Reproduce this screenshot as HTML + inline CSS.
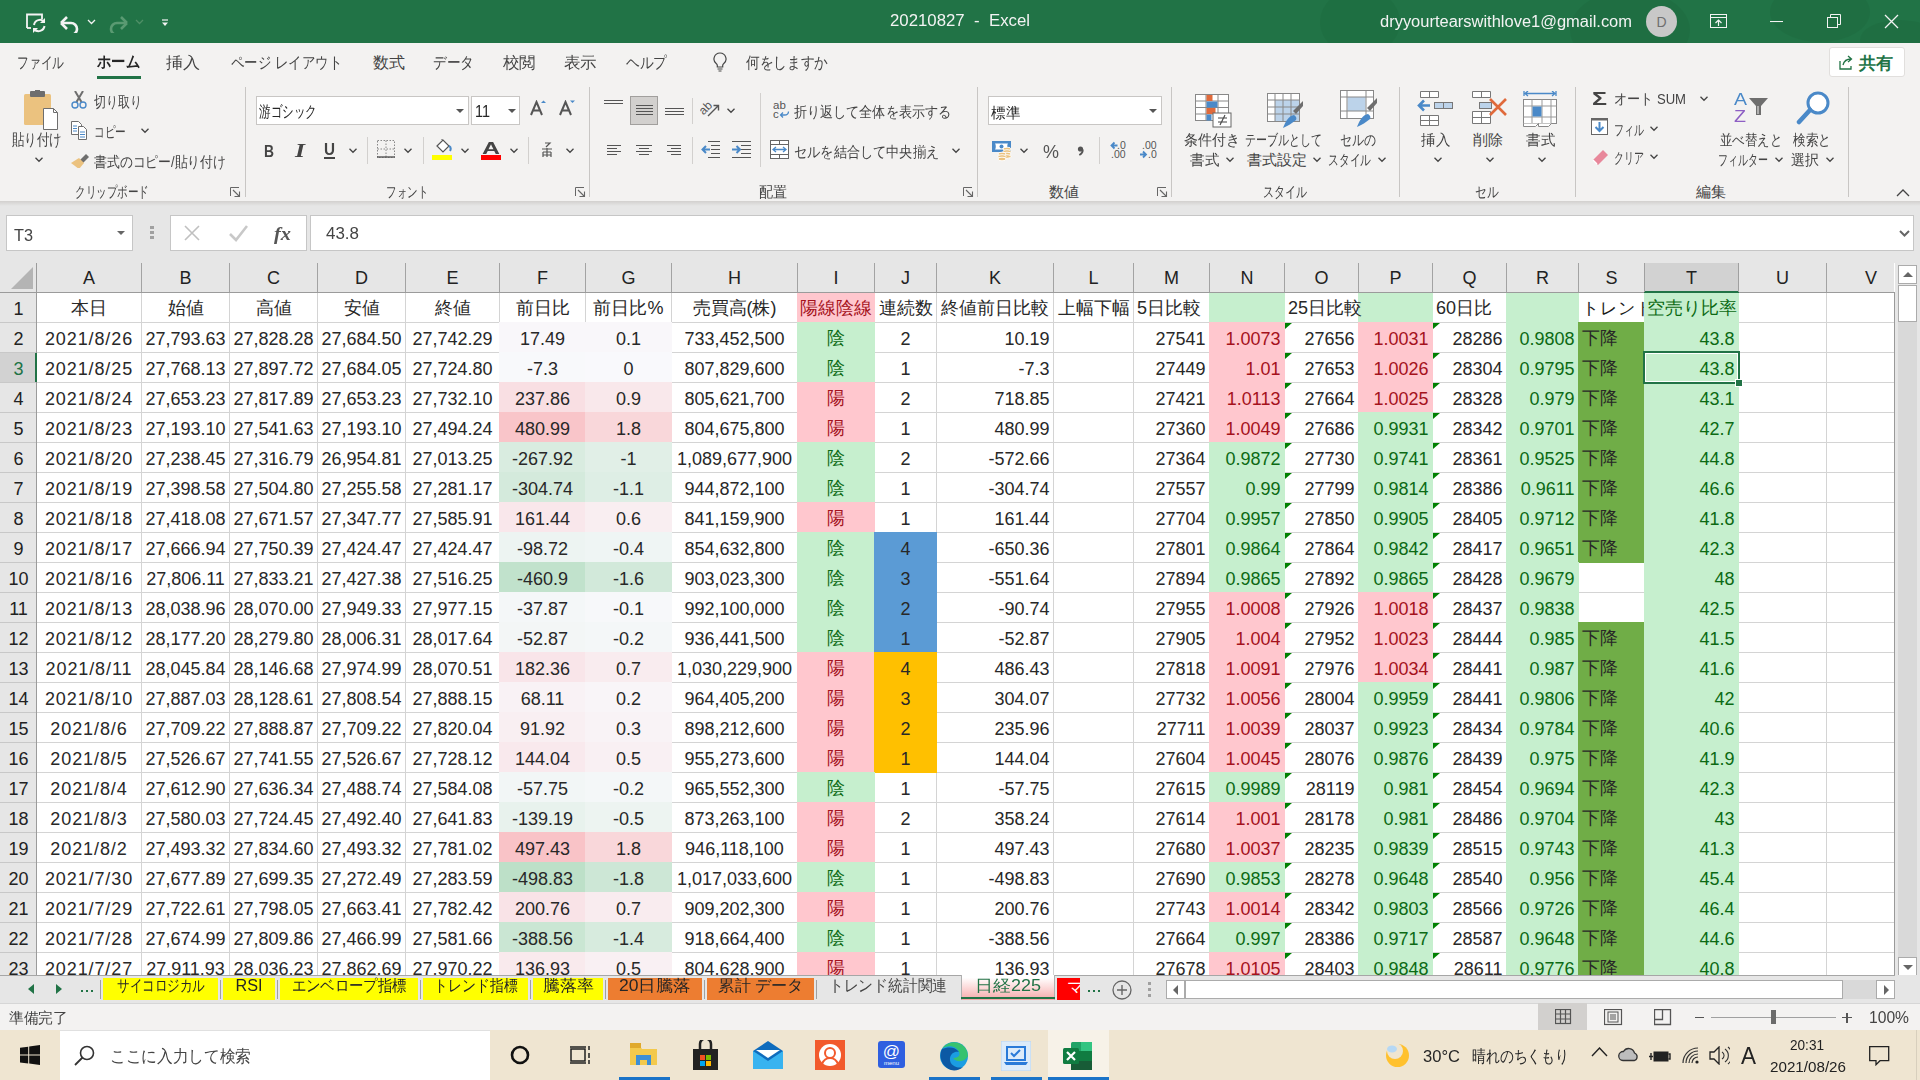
<!DOCTYPE html>
<html><head><meta charset="utf-8"><style>
html,body{margin:0;padding:0;width:1920px;height:1080px;overflow:hidden;background:#fff;}
body{position:relative;font-family:"Liberation Sans",sans-serif;}
div{position:absolute;box-sizing:border-box;}
.t{white-space:nowrap;}
</style></head><body>
<div style="left:0px;top:0px;width:1920px;height:43px;background:#217346;"></div>
<svg style="position:absolute;left:1300px;top:0" width="620" height="43"><g fill="#1e6b40" opacity="0.55"><ellipse cx="60" cy="22" rx="40" ry="34"/><ellipse cx="330" cy="30" rx="60" ry="40"/><ellipse cx="520" cy="12" rx="50" ry="30"/><ellipse cx="600" cy="40" rx="40" ry="20"/></g></svg>
<svg style="position:absolute;left:25px;top:13px;" width="22" height="21" viewBox="0 0 22 21"><g fill="none" stroke="#f3f3f3" stroke-width="1.8"><path d="M2 15V1.5h15V6"/><path d="M2 15h4"/></g><g fill="none" stroke="#f3f3f3" stroke-width="2"><path d="M9 12a6 6 0 0 1 10.5-3"/><path d="M19.5 13a6 6 0 0 1-10.5 3"/></g><path d="M20 5v5h-5z" fill="#f3f3f3"/><path d="M8 20v-5h5z" fill="#f3f3f3"/></svg>
<svg style="position:absolute;left:60px;top:15px;" width="20" height="18" viewBox="0 0 20 18"><path d="M2 8h9a6 6 0 0 1 0 12h-1" fill="none" stroke="#f3f3f3" stroke-width="2.6"/><path d="M1 8l6-6M1 8l6 6" stroke="#f3f3f3" stroke-width="2.6" fill="none"/></svg>
<svg style="position:absolute;left:87px;top:19px;" width="9" height="6" viewBox="0 0 9 6"><path d="M1 1l3.5 3.5L8 1" fill="none" stroke="#f3f3f3" stroke-width="1.3"/></svg>
<svg style="position:absolute;left:108px;top:15px;" width="20" height="18" viewBox="0 0 20 18"><path d="M18 8H9a6 6 0 0 0 0 12h1" fill="none" stroke="#5a9a72" stroke-width="2.6"/><path d="M19 8l-6-6M19 8l-6 6" stroke="#5a9a72" stroke-width="2.6" fill="none"/></svg>
<svg style="position:absolute;left:135px;top:19px;" width="9" height="6" viewBox="0 0 9 6"><path d="M1 1l3.5 3.5L8 1" fill="none" stroke="#4f8f66" stroke-width="1.3"/></svg>
<svg style="position:absolute;left:162px;top:19px;" width="7" height="8" viewBox="0 0 7 8"><path d="M0 1h6" stroke="#f3f3f3" stroke-width="1.2"/><path d="M0 3.5h6L3 7z" fill="#f3f3f3"/></svg>
<div class="t" style="top:12.64px;font-size:16px;line-height:16px;color:#f3f3f3;left:660px;width:600px;text-align:center;transform-origin:50% 50%;transform:scaleX(1.0493);">20210827&nbsp;&nbsp;-&nbsp;&nbsp;Excel</div>
<div class="t" style="top:13.64px;font-size:16px;line-height:16px;color:#f3f3f3;left:1380px;transform-origin:0 50%;transform:scaleX(1.0295);">dryyourtearswithlove1@gmail.com</div>
<div style="left:1646px;top:6px;width:31px;height:31px;border-radius:50%;background:#c8c8c8"></div>
<div class="t" style="top:15.06px;font-size:14px;line-height:14px;color:#6f6f6f;left:1361.5px;width:600px;text-align:center;transform-origin:50% 50%;">D</div>
<svg style="position:absolute;left:1710px;top:14px;" width="18" height="15" viewBox="0 0 18 15"><rect x="0.5" y="0.5" width="16" height="13" fill="none" stroke="#f3f3f3"/><path d="M0.5 3.5h16" stroke="#f3f3f3"/><path d="M8.5 12V6M5.5 9l3-3 3 3" fill="none" stroke="#f3f3f3" stroke-width="1.2"/></svg>
<svg style="position:absolute;left:1770px;top:21px;" width="14" height="2" viewBox="0 0 14 2"><path d="M0 0.5h13" stroke="#f3f3f3" stroke-width="1.1"/></svg>
<svg style="position:absolute;left:1827px;top:14px;" width="15" height="15" viewBox="0 0 15 15"><rect x="0.5" y="3.5" width="10" height="10" fill="none" stroke="#f3f3f3"/><path d="M3.5 3.5V0.5h10v10h-3" fill="none" stroke="#f3f3f3"/></svg>
<svg style="position:absolute;left:1884px;top:14px;" width="15" height="15" viewBox="0 0 15 15"><path d="M1 1l13 13M14 1L1 14" stroke="#f3f3f3" stroke-width="1.3"/></svg>
<div style="left:0px;top:43px;width:1920px;height:159px;background:#f3f2f1;"></div>
<div style="left:0;top:201px;width:1920px;height:5px;background:linear-gradient(#d2d0ce,#e6e6e6)"></div>
<div style="left:0px;top:206px;width:1920px;height:57px;background:#e6e6e6;"></div>
<div class="t" style="top:54.64px;font-size:16px;line-height:16px;color:#444;left:17px;transform-origin:0 50%;transform:scaleX(0.7344);">ファイル</div>
<div class="t" style="top:54.64px;font-size:16px;line-height:16px;color:#444;left:166px;transform-origin:0 50%;transform:scaleX(1.0625);">挿入</div>
<div class="t" style="top:54.64px;font-size:16px;line-height:16px;color:#444;left:231px;transform-origin:0 50%;transform:scaleX(0.8380);">ページ レイアウト</div>
<div class="t" style="top:54.64px;font-size:16px;line-height:16px;color:#444;left:373px;transform-origin:0 50%;transform:scaleX(1.0000);">数式</div>
<div class="t" style="top:54.64px;font-size:16px;line-height:16px;color:#444;left:433px;transform-origin:0 50%;transform:scaleX(0.8542);">データ</div>
<div class="t" style="top:54.64px;font-size:16px;line-height:16px;color:#444;left:503px;transform-origin:0 50%;transform:scaleX(1.0312);">校閲</div>
<div class="t" style="top:54.64px;font-size:16px;line-height:16px;color:#444;left:564px;transform-origin:0 50%;transform:scaleX(1.0312);">表示</div>
<div class="t" style="top:54.64px;font-size:16px;line-height:16px;color:#444;left:626px;transform-origin:0 50%;transform:scaleX(0.8542);">ヘルプ</div>
<div class="t" style="top:54.64px;font-size:16px;line-height:16px;color:#444;left:746px;transform-origin:0 50%;transform:scaleX(0.8542);">何をしますか</div>
<div class="t" style="top:53.64px;font-size:16px;line-height:16px;color:#262626;font-weight:700;left:97px;transform-origin:0 50%;transform:scaleX(0.8958);">ホーム</div>
<div style="left:97px;top:76px;width:44px;height:3px;background:#217346;"></div>
<svg style="position:absolute;left:713px;top:52px;" width="14" height="20" viewBox="0 0 14 20"><path d="M7 1a6 6 0 0 1 3.6 10.8c-.6.5-.9 1-.9 1.7V15H4.3v-1.5c0-.7-.3-1.2-.9-1.7A6 6 0 0 1 7 1z" fill="none" stroke="#444" stroke-width="1.2"/><path d="M4.5 17h5M5.5 19h3" stroke="#444" stroke-width="1.2"/></svg>
<div style="left:1829px;top:47px;width:76px;height:30px;background:#fff;border:1px solid #e1dfdd;border-radius:3px"></div>
<svg style="position:absolute;left:1839px;top:55px;" width="15" height="15" viewBox="0 0 15 15"><path d="M1 6v8h11v-3" fill="none" stroke="#217346" stroke-width="1.3"/><path d="M4 10c1-4 4-6 8-6M9 1l3.5 3L9 7" fill="none" stroke="#217346" stroke-width="1.3"/></svg>
<div class="t" style="top:54.68px;font-size:17px;line-height:17px;color:#217346;font-weight:700;left:1859px;transform-origin:0 50%;transform:scaleX(1.0000);">共有</div>
<div style="left:245px;top:87px;width:1px;height:110px;background:#c8c6c4;"></div>
<div style="left:589px;top:87px;width:1px;height:110px;background:#c8c6c4;"></div>
<div style="left:977px;top:87px;width:1px;height:110px;background:#c8c6c4;"></div>
<div style="left:1171px;top:87px;width:1px;height:110px;background:#c8c6c4;"></div>
<div style="left:1399px;top:87px;width:1px;height:110px;background:#c8c6c4;"></div>
<div style="left:1575px;top:87px;width:1px;height:110px;background:#c8c6c4;"></div>
<div style="left:1848px;top:87px;width:1px;height:110px;background:#c8c6c4;"></div>
<div class="t" style="top:184.1px;font-size:15px;line-height:15px;color:#444;left:75px;transform-origin:0 50%;transform:scaleX(0.7048);">クリップボード</div>
<div class="t" style="top:184.1px;font-size:15px;line-height:15px;color:#444;left:386px;transform-origin:0 50%;transform:scaleX(0.7000);">フォント</div>
<div class="t" style="top:184.1px;font-size:15px;line-height:15px;color:#444;left:759px;transform-origin:0 50%;transform:scaleX(0.9333);">配置</div>
<div class="t" style="top:184.1px;font-size:15px;line-height:15px;color:#444;left:1049px;transform-origin:0 50%;transform:scaleX(1.0000);">数値</div>
<div class="t" style="top:184.1px;font-size:15px;line-height:15px;color:#444;left:1263px;transform-origin:0 50%;transform:scaleX(0.7333);">スタイル</div>
<div class="t" style="top:184.1px;font-size:15px;line-height:15px;color:#444;left:1475px;transform-origin:0 50%;transform:scaleX(0.7833);">セル</div>
<div class="t" style="top:184.1px;font-size:15px;line-height:15px;color:#444;left:1696px;transform-origin:0 50%;transform:scaleX(1.0000);">編集</div>
<svg style="position:absolute;left:230px;top:187px;" width="11" height="11" viewBox="0 0 11 11"><path d="M0.5 9V0.5H9" fill="none" stroke="#666"/><path d="M3 3l6.5 6.5M9.5 4.5v5h-5" fill="none" stroke="#666" stroke-width="1.1"/></svg>
<svg style="position:absolute;left:575px;top:187px;" width="11" height="11" viewBox="0 0 11 11"><path d="M0.5 9V0.5H9" fill="none" stroke="#666"/><path d="M3 3l6.5 6.5M9.5 4.5v5h-5" fill="none" stroke="#666" stroke-width="1.1"/></svg>
<svg style="position:absolute;left:963px;top:187px;" width="11" height="11" viewBox="0 0 11 11"><path d="M0.5 9V0.5H9" fill="none" stroke="#666"/><path d="M3 3l6.5 6.5M9.5 4.5v5h-5" fill="none" stroke="#666" stroke-width="1.1"/></svg>
<svg style="position:absolute;left:1157px;top:187px;" width="11" height="11" viewBox="0 0 11 11"><path d="M0.5 9V0.5H9" fill="none" stroke="#666"/><path d="M3 3l6.5 6.5M9.5 4.5v5h-5" fill="none" stroke="#666" stroke-width="1.1"/></svg>
<svg style="position:absolute;left:1896px;top:189px;" width="14" height="9" viewBox="0 0 14 9"><path d="M1 7l6-6 6 6" fill="none" stroke="#444" stroke-width="1.3"/></svg>
<svg style="position:absolute;left:24px;top:90px;" width="35" height="40" viewBox="0 0 35 40"><rect x="0" y="4" width="27" height="31" rx="1.5" fill="#ebc27f"/><rect x="6" y="1" width="15" height="6" rx="1" fill="#6e6e6e"/><rect x="11" y="0" width="5" height="3" fill="#6e6e6e"/><path d="M19.5 18.5h10l4 4v17h-14z" fill="#fff" stroke="#6e6e6e"/><path d="M29.5 18.5v4h4" fill="none" stroke="#6e6e6e"/></svg>
<div class="t" style="top:131.94px;font-size:16px;line-height:16px;color:#444;left:12px;transform-origin:0 50%;transform:scaleX(0.7812);">貼り付け</div>
<svg style="position:absolute;left:35px;top:157px;" width="8" height="6" viewBox="0 0 8 6"><path d="M0.5 0.8l3.5 3.5 3.5-3.5" fill="none" stroke="#444" stroke-width="1.3"/></svg>
<svg style="position:absolute;left:71px;top:91px;" width="16" height="18" viewBox="0 0 16 18"><path d="M4 0l6.5 11M12 0L5.5 11" stroke="#6e6e6e" stroke-width="2"/><circle cx="4" cy="14" r="3" fill="none" stroke="#4a89c8" stroke-width="1.4"/><circle cx="12" cy="14" r="3" fill="none" stroke="#4a89c8" stroke-width="1.4"/></svg>
<div class="t" style="top:93.8px;font-size:15px;line-height:15px;color:#444;left:94px;transform-origin:0 50%;transform:scaleX(0.8000);">切り取り</div>
<svg style="position:absolute;left:71px;top:121px;" width="17" height="20" viewBox="0 0 17 20"><path d="M0.5 0.5h7l3 3v10H0.5z" fill="#fff" stroke="#6e6e6e"/><path d="M7.5 5.5h5l3 3v10h-8z" fill="#fff" stroke="#6e6e6e"/><path d="M2 5h4M2 7.5h4M2 10h4M9 11h5M9 13.5h5M9 16h5" stroke="#4a89c8"/></svg>
<div class="t" style="top:124.1px;font-size:15px;line-height:15px;color:#444;left:94px;transform-origin:0 50%;transform:scaleX(0.7111);">コピー</div>
<svg style="position:absolute;left:141px;top:128px;" width="8" height="6" viewBox="0 0 8 6"><path d="M0.5 0.8l3.5 3.5 3.5-3.5" fill="none" stroke="#444" stroke-width="1.3"/></svg>
<svg style="position:absolute;left:71px;top:151px;" width="18" height="17" viewBox="0 0 18 17"><path d="M9 9l6-6 3 3-6 6z" fill="#6e6e6e"/><path d="M0 12l8-5 5 5-5 6z" fill="#ebc27f"/></svg>
<div class="t" style="top:154.1px;font-size:15px;line-height:15px;color:#444;left:94px;transform-origin:0 50%;transform:scaleX(0.8562);">書式のコピー/貼り付け</div>
<div style="left:256px;top:96px;width:213px;height:29px;background:#fff;border:1px solid #c8c6c4"></div>
<div style="left:471px;top:96px;width:49px;height:29px;background:#fff;border:1px solid #c8c6c4"></div>
<div class="t" style="top:103.64px;font-size:16px;line-height:16px;color:#262626;left:259px;transform-origin:0 50%;transform:scaleX(0.7250);">游ゴシック</div>
<div class="t" style="top:103.64px;font-size:16px;line-height:16px;color:#262626;left:475px;transform-origin:0 50%;transform:scaleX(0.9031);">11</div>
<svg style="position:absolute;left:456px;top:109px;" width="8" height="4" viewBox="0 0 8 4"><path d="M0 0h8L4 4z" fill="#555"/></svg>
<svg style="position:absolute;left:508px;top:109px;" width="8" height="4" viewBox="0 0 8 4"><path d="M0 0h8L4 4z" fill="#555"/></svg>
<svg style="position:absolute;left:530px;top:100px;" width="16" height="16" viewBox="0 0 16 16"><path d="M1 15L6.5 2 12 15M3 10.5h7" fill="none" stroke="#555" stroke-width="2"/><path d="M11 3l2.5-2.5L16 3z" fill="#4a89c8"/></svg>
<svg style="position:absolute;left:559px;top:100px;" width="16" height="16" viewBox="0 0 16 16"><path d="M1 15L6.5 2 12 15M3 10.5h7" fill="none" stroke="#555" stroke-width="2"/><path d="M11 0.5h5L13.5 3z" fill="#4a89c8"/></svg>
<div class="t" style="top:142.68px;font-size:17px;line-height:17px;color:#444;font-weight:700;left:264px;transform-origin:0 50%;transform:scaleX(0.8142);">B</div>
<div class="t" style="top:142.22px;font-size:18px;line-height:18px;color:#444;font-weight:700;font-family:'Liberation Serif',serif;left:295px;transform-origin:0 50%;transform:scaleX(1.4254);"><i>I</i></div>
<div class="t" style="top:142.14px;font-size:16px;line-height:16px;color:#444;font-weight:700;left:324px;transform-origin:0 50%;transform:scaleX(0.9514);">U</div>
<div style="left:324px;top:157px;width:11px;height:1.5px;background:#444;"></div>
<svg style="position:absolute;left:349px;top:148px;" width="8" height="6" viewBox="0 0 8 6"><path d="M0.5 0.8l3.5 3.5 3.5-3.5" fill="none" stroke="#444" stroke-width="1.3"/></svg>
<div style="left:367px;top:137px;width:1px;height:27px;background:#d2d0ce;"></div>
<svg style="position:absolute;left:377px;top:140px;" width="18" height="18" viewBox="0 0 18 18"><path d="M0.5 0.5h17v17H0.5zM9 0.5v17M0.5 9h17" fill="none" stroke="#888" stroke-dasharray="1.5 1.5"/><path d="M0 17h18" stroke="#555" stroke-width="1.4"/></svg>
<svg style="position:absolute;left:404px;top:148px;" width="8" height="6" viewBox="0 0 8 6"><path d="M0.5 0.8l3.5 3.5 3.5-3.5" fill="none" stroke="#444" stroke-width="1.3"/></svg>
<div style="left:423px;top:137px;width:1px;height:27px;background:#d2d0ce;"></div>
<svg style="position:absolute;left:432px;top:139px;" width="21" height="15" viewBox="0 0 21 15"><path d="M5 7l6-6 6 6-6 6z" fill="#fff" stroke="#555" stroke-width="1.2"/><path d="M10 1V0" stroke="#555"/><path d="M17 7c2 1 2 3 1 5" fill="none" stroke="#4a89c8" stroke-width="2"/></svg>
<div style="left:432px;top:155px;width:20px;height:5px;background:#ffff00;"></div>
<svg style="position:absolute;left:461px;top:148px;" width="8" height="6" viewBox="0 0 8 6"><path d="M0.5 0.8l3.5 3.5 3.5-3.5" fill="none" stroke="#444" stroke-width="1.3"/></svg>
<div class="t" style="top:139.68px;font-size:17px;line-height:17px;color:#444;font-weight:700;left:482px;transform-origin:0 50%;transform:scaleX(1.4656);">A</div>
<div style="left:481px;top:155px;width:20px;height:5px;background:#ff0000;"></div>
<svg style="position:absolute;left:510px;top:148px;" width="8" height="6" viewBox="0 0 8 6"><path d="M0.5 0.8l3.5 3.5 3.5-3.5" fill="none" stroke="#444" stroke-width="1.3"/></svg>
<div style="left:528px;top:137px;width:1px;height:27px;background:#d2d0ce;"></div>
<svg style="position:absolute;left:542px;top:142px;" width="10" height="16" viewBox="0 0 10 16"><path d="M3 1h5L4 5M0 7h10M1 10h8M1 13h8M5 6v9M1 10v5M9 10v5" fill="none" stroke="#555" stroke-width="1.2"/></svg>
<svg style="position:absolute;left:566px;top:148px;" width="8" height="6" viewBox="0 0 8 6"><path d="M0.5 0.8l3.5 3.5 3.5-3.5" fill="none" stroke="#444" stroke-width="1.3"/></svg>
<svg style="position:absolute;left:604px;top:100px;" width="20" height="8" viewBox="0 0 20 8"><path d="M0 0.5h19M0 3.5h19" stroke="#555" stroke-width="1.2"/></svg>
<div style="left:630px;top:96px;width:28px;height:29px;background:#d2d0ce;border:1px solid #a19f9d"></div>
<svg style="position:absolute;left:636px;top:105px;" width="20" height="14" viewBox="0 0 20 14"><path d="M0 0.5h17M0 3.5h17M0 6.5h17M0 9.5h17" stroke="#555" stroke-width="1.2"/></svg>
<svg style="position:absolute;left:665px;top:108px;" width="20" height="11" viewBox="0 0 20 11"><path d="M0 0.5h19M0 3.5h19M0 6.5h19" stroke="#555" stroke-width="1.2"/></svg>
<div style="left:692px;top:98px;width:1px;height:26px;background:#d2d0ce;"></div>
<svg style="position:absolute;left:700px;top:100px;" width="22" height="18" viewBox="0 0 22 18"><text x="0" y="0" font-family="Liberation Sans" font-size="12" fill="#555" transform="translate(3.5 15.5) rotate(-45)">ab</text><path d="M8 16L18 6M13.5 5.5H18.5V10.5" fill="none" stroke="#555" stroke-width="1.4"/></svg>
<svg style="position:absolute;left:727px;top:108px;" width="8" height="6" viewBox="0 0 8 6"><path d="M0.5 0.8l3.5 3.5 3.5-3.5" fill="none" stroke="#444" stroke-width="1.3"/></svg>
<div style="left:760px;top:93px;width:1px;height:74px;background:#d2d0ce;"></div>
<svg style="position:absolute;left:773px;top:100px;" width="18" height="20" viewBox="0 0 18 20"><text x="0" y="9" font-family="Liberation Sans" font-size="11.5" fill="#555">ab</text><text x="0" y="18" font-family="Liberation Sans" font-size="11.5" fill="#555">c</text><path d="M15.5 11.5c0 2.5-1.5 3.5-4 3.5H8M10 12.5L7.5 15 10 17.5" fill="none" stroke="#4a89c8" stroke-width="1.3"/></svg>
<div class="t" style="top:103.6px;font-size:15px;line-height:15px;color:#444;left:794px;transform-origin:0 50%;transform:scaleX(0.8722);">折り返して全体を表示する</div>
<svg style="position:absolute;left:607px;top:145px;" width="20" height="14" viewBox="0 0 20 14"><path d="M0 0.5h14M0 3.5h10M0 6.5h14M0 9.5h10" stroke="#555" stroke-width="1.2"/></svg>
<svg style="position:absolute;left:636px;top:145px;" width="20" height="14" viewBox="0 0 20 14"><path d="M0 0.5h16M3 3.5h10M0 6.5h16M3 9.5h10" stroke="#555" stroke-width="1.2"/></svg>
<svg style="position:absolute;left:667px;top:145px;" width="20" height="14" viewBox="0 0 20 14"><path d="M0 0.5h14M4 3.5h10M0 6.5h14M4 9.5h10" stroke="#555" stroke-width="1.2"/></svg>
<div style="left:692px;top:137px;width:1px;height:27px;background:#d2d0ce;"></div>
<svg style="position:absolute;left:701px;top:141px;" width="20" height="18" viewBox="0 0 20 18"><path d="M7 0.5h12M10 4.5h9M10 8.5h9M10 12.5h9M7 16.5h12" stroke="#555" stroke-width="1.2"/><path d="M1 8.5h8M5 5l-3.5 3.5L5 12" fill="none" stroke="#4a89c8" stroke-width="2"/></svg>
<svg style="position:absolute;left:732px;top:141px;" width="20" height="18" viewBox="0 0 20 18"><path d="M0 0.5h19M9 4.5h10M9 8.5h10M9 12.5h10M0 16.5h19" stroke="#555" stroke-width="1.2"/><path d="M0 8.5h8M4.5 5l3.5 3.5L4.5 12" fill="none" stroke="#4a89c8" stroke-width="2"/></svg>
<svg style="position:absolute;left:770px;top:140px;" width="19" height="19" viewBox="0 0 19 19"><rect x="0.5" y="0.5" width="18" height="18" fill="#fff" stroke="#666"/><path d="M0.5 4.5h18M0.5 14.5h18M9.5 0.5v4M9.5 14.5v4" stroke="#666"/><path d="M3 9.5h13M6 7l-3 2.5 3 2.5M13 7l3 2.5-3 2.5" fill="none" stroke="#4a89c8" stroke-width="1.3"/></svg>
<div class="t" style="top:144.1px;font-size:15px;line-height:15px;color:#444;left:794px;transform-origin:0 50%;transform:scaleX(0.8788);">セルを結合して中央揃え</div>
<svg style="position:absolute;left:952px;top:148px;" width="8" height="6" viewBox="0 0 8 6"><path d="M0.5 0.8l3.5 3.5 3.5-3.5" fill="none" stroke="#444" stroke-width="1.3"/></svg>
<div style="left:988px;top:96px;width:174px;height:29px;background:#fff;border:1px solid #c8c6c4"></div>
<div class="t" style="top:104.6px;font-size:15px;line-height:15px;color:#262626;left:991px;transform-origin:0 50%;transform:scaleX(0.9667);">標準</div>
<svg style="position:absolute;left:1149px;top:109px;" width="8" height="4" viewBox="0 0 8 4"><path d="M0 0h8L4 4z" fill="#555"/></svg>
<svg style="position:absolute;left:992px;top:141px;" width="20" height="21" viewBox="0 0 20 21"><rect x="0" y="0" width="19" height="11" fill="#4a89c8"/><path d="M3 2.5h13c-1 1-1 5 0 6H3c1-1 1-5 0-6z" fill="#fff"/><circle cx="9.5" cy="5.5" r="2" fill="#4a89c8"/><g fill="#ebc27f" stroke="#fff" stroke-width="0.9"><ellipse cx="15" cy="8" rx="4" ry="1.8"/><ellipse cx="15" cy="10.5" rx="4" ry="1.8"/><ellipse cx="15" cy="13" rx="4" ry="1.8"/><ellipse cx="15" cy="15.5" rx="4" ry="1.8"/><ellipse cx="10" cy="13" rx="4" ry="1.8"/><ellipse cx="10" cy="15.5" rx="4" ry="1.8"/><ellipse cx="10" cy="18" rx="4" ry="1.8"/></g></svg>
<svg style="position:absolute;left:1020px;top:148px;" width="8" height="6" viewBox="0 0 8 6"><path d="M0.5 0.8l3.5 3.5 3.5-3.5" fill="none" stroke="#444" stroke-width="1.3"/></svg>
<div class="t" style="top:141.76px;font-size:19px;line-height:19px;color:#555;left:1043px;transform-origin:0 50%;transform:scaleX(0.9464);">%</div>
<svg style="position:absolute;left:1077px;top:146px;" width="8" height="10" viewBox="0 0 8 10"><circle cx="3.5" cy="3" r="2.6" fill="#555"/><path d="M5.8 3.5c0 3-1.5 4.5-3.5 5.5" fill="none" stroke="#555" stroke-width="1.8"/></svg>
<div style="left:1099px;top:137px;width:1px;height:27px;background:#d2d0ce;"></div>
<svg style="position:absolute;left:1110px;top:141px;" width="18" height="19" viewBox="0 0 18 19"><text x="7" y="8" font-family="Liberation Sans" font-size="10.5" fill="#555">.0</text><text x="1" y="17" font-family="Liberation Sans" font-size="10.5" fill="#555">.00</text><path d="M1.5 4.5h6M4.5 1.5L1.5 4.5 4.5 7.5" fill="none" stroke="#4a89c8" stroke-width="1.8"/></svg>
<svg style="position:absolute;left:1139px;top:141px;" width="18" height="19" viewBox="0 0 18 19"><text x="3" y="8" font-family="Liberation Sans" font-size="10.5" fill="#555">.00</text><text x="9" y="17" font-family="Liberation Sans" font-size="10.5" fill="#555">.0</text><path d="M1 13.5h6M4 10.5L7 13.5 4 16.5" fill="none" stroke="#4a89c8" stroke-width="1.8"/></svg>
<svg style="position:absolute;left:1195px;top:94px;" width="37" height="34" viewBox="0 0 37 34"><rect x="0.5" y="0.5" width="33" height="26" fill="#fff" stroke="#888"/><path d="M0.5 7h33M0.5 13.5h33M0.5 20h33M11 0.5v26M23 0.5v26" stroke="#888"/><rect x="11.5" y="1" width="6" height="6" fill="#e06a3b"/><rect x="11.5" y="7.5" width="11" height="6" fill="#4a89c8"/><rect x="11.5" y="14" width="9" height="6" fill="#e06a3b"/><rect x="11.5" y="20.5" width="5" height="6" fill="#4a89c8"/><rect x="18" y="19" width="18" height="14" fill="#fff" stroke="#666"/><path d="M23 24h9M23 28h9M30 21l-5 10" stroke="#444" stroke-width="1.1"/></svg>
<div class="t" style="top:132.4px;font-size:15px;line-height:15px;color:#444;left:1184px;transform-origin:0 50%;transform:scaleX(0.9333);">条件付き</div>
<div class="t" style="top:151.6px;font-size:15px;line-height:15px;color:#444;left:1190px;transform-origin:0 50%;transform:scaleX(0.9667);">書式</div>
<svg style="position:absolute;left:1226px;top:157px;" width="8" height="6" viewBox="0 0 8 6"><path d="M0.5 0.8l3.5 3.5 3.5-3.5" fill="none" stroke="#444" stroke-width="1.3"/></svg>
<svg style="position:absolute;left:1267px;top:93px;" width="37" height="36" viewBox="0 0 37 36"><rect x="0.5" y="0.5" width="32" height="28" fill="#fff" stroke="#888"/><rect x="8" y="7" width="24" height="21" fill="#bcd3ea"/><path d="M0.5 7h32M0.5 14h32M0.5 21h32M8 0.5v28M16 0.5v28M24 0.5v28" stroke="#888"/><path d="M26 18l10-10v5l-7 8z" fill="#6e6e6e"/><path d="M16 35c3-8 6-12 11-13 2 1 3 3 2 5-4 3-8 6-13 8z" fill="#4a89c8"/></svg>
<div class="t" style="top:132.4px;font-size:15px;line-height:15px;color:#444;left:1245px;transform-origin:0 50%;transform:scaleX(0.7333);">テーブルとして</div>
<div class="t" style="top:151.6px;font-size:15px;line-height:15px;color:#444;left:1247px;transform-origin:0 50%;transform:scaleX(1.0000);">書式設定</div>
<svg style="position:absolute;left:1313px;top:157px;" width="8" height="6" viewBox="0 0 8 6"><path d="M0.5 0.8l3.5 3.5 3.5-3.5" fill="none" stroke="#444" stroke-width="1.3"/></svg>
<svg style="position:absolute;left:1340px;top:90px;" width="38" height="39" viewBox="0 0 38 39"><rect x="0.5" y="0.5" width="33" height="28" fill="#fff" stroke="#888"/><rect x="7.5" y="7" width="18" height="14" fill="#bcd3ea"/><path d="M0.5 7h33M0.5 21h33M7 0.5v28M26 0.5v28" stroke="#888"/><path d="M27 18l10-10v5l-7 8z" fill="#6e6e6e"/><path d="M17 37c3-8 6-12 11-13 2 1 3 3 2 5-4 3-8 6-13 8z" fill="#4a89c8"/></svg>
<div class="t" style="top:132.4px;font-size:15px;line-height:15px;color:#444;left:1340px;transform-origin:0 50%;transform:scaleX(0.8000);">セルの</div>
<div class="t" style="top:151.6px;font-size:15px;line-height:15px;color:#444;left:1328px;transform-origin:0 50%;transform:scaleX(0.7167);">スタイル</div>
<svg style="position:absolute;left:1378px;top:157px;" width="8" height="6" viewBox="0 0 8 6"><path d="M0.5 0.8l3.5 3.5 3.5-3.5" fill="none" stroke="#444" stroke-width="1.3"/></svg>
<svg style="position:absolute;left:1417px;top:91px;" width="37" height="36" viewBox="0 0 37 36"><path d="M3.5 0.5h18v6h-18zM12.5 0.5v6M3.5 24.5h18v10h-18zM12.5 24.5v10M3.5 29.5h18" fill="#fff" stroke="#777"/><rect x="17.5" y="11.5" width="18" height="6" fill="#bcd3ea" stroke="#777"/><path d="M26.5 11.5v6" stroke="#777"/><path d="M2 14.5h11M7 9.5l-5 5 5 5" fill="none" stroke="#4a89c8" stroke-width="2.6"/></svg>
<div class="t" style="top:132.4px;font-size:15px;line-height:15px;color:#444;left:1421px;transform-origin:0 50%;transform:scaleX(0.9667);">挿入</div>
<svg style="position:absolute;left:1434px;top:157px;" width="8" height="6" viewBox="0 0 8 6"><path d="M0.5 0.8l3.5 3.5 3.5-3.5" fill="none" stroke="#444" stroke-width="1.3"/></svg>
<svg style="position:absolute;left:1472px;top:91px;" width="36" height="34" viewBox="0 0 36 34"><path d="M0.5 0.5h18v6h-18zM9.5 0.5v6M0.5 20.5h18v12h-18zM9.5 20.5v12M0.5 26.5h18" fill="#fff" stroke="#777"/><rect x="7.5" y="11.5" width="12" height="6" fill="#bcd3ea" stroke="#777"/><path d="M18 8l16 16M34 8L18 24" stroke="#e06a3b" stroke-width="2.6"/></svg>
<div class="t" style="top:132.4px;font-size:15px;line-height:15px;color:#444;left:1473px;transform-origin:0 50%;transform:scaleX(1.0000);">削除</div>
<svg style="position:absolute;left:1486px;top:157px;" width="8" height="6" viewBox="0 0 8 6"><path d="M0.5 0.8l3.5 3.5 3.5-3.5" fill="none" stroke="#444" stroke-width="1.3"/></svg>
<svg style="position:absolute;left:1523px;top:91px;" width="35" height="37" viewBox="0 0 35 37"><path d="M1 0v5M33 0v5M2 2.5h30M5 0l-3 2.5L5 5M29 0l3 2.5L29 5" fill="none" stroke="#4a89c8" stroke-width="1.3"/><rect x="0.5" y="8.5" width="33" height="24" fill="#fff" stroke="#888"/><path d="M0.5 15h33M0.5 26h33M9 8.5v24M19 8.5v24M28 8.5v24" stroke="#999"/><rect x="9.5" y="15.5" width="9" height="10" fill="#4a89c8"/><path d="M0.5 32.5v3h12l3-3M15.5 32.5v3h10l3-3" fill="#fff" stroke="#888"/></svg>
<div class="t" style="top:132.4px;font-size:15px;line-height:15px;color:#444;left:1526px;transform-origin:0 50%;transform:scaleX(0.9667);">書式</div>
<svg style="position:absolute;left:1538px;top:157px;" width="8" height="6" viewBox="0 0 8 6"><path d="M0.5 0.8l3.5 3.5 3.5-3.5" fill="none" stroke="#444" stroke-width="1.3"/></svg>
<div class="t" style="top:89.26px;font-size:19px;line-height:19px;color:#444;font-weight:700;left:1592px;transform-origin:0 50%;transform:scaleX(1.3151);">&Sigma;</div>
<div class="t" style="top:91.1px;font-size:15px;line-height:15px;color:#444;left:1614px;transform-origin:0 50%;transform:scaleX(0.8727);">オート SUM</div>
<svg style="position:absolute;left:1700px;top:96px;" width="8" height="6" viewBox="0 0 8 6"><path d="M0.5 0.8l3.5 3.5 3.5-3.5" fill="none" stroke="#444" stroke-width="1.3"/></svg>
<svg style="position:absolute;left:1591px;top:118px;" width="18" height="18" viewBox="0 0 18 18"><rect x="0.5" y="0.5" width="16" height="16" fill="#fff" stroke="#666"/><path d="M0.5 1.5h16" stroke="#666" stroke-width="2"/><path d="M8.5 4v9M4.5 9l4 4 4-4" fill="none" stroke="#4a89c8" stroke-width="2"/></svg>
<div class="t" style="top:121.6px;font-size:15px;line-height:15px;color:#444;left:1614px;transform-origin:0 50%;transform:scaleX(0.6667);">フィル</div>
<svg style="position:absolute;left:1650px;top:126px;" width="8" height="6" viewBox="0 0 8 6"><path d="M0.5 0.8l3.5 3.5 3.5-3.5" fill="none" stroke="#444" stroke-width="1.3"/></svg>
<svg style="position:absolute;left:1592px;top:148px;" width="17" height="17" viewBox="0 0 17 17"><path d="M1 12l10-10 5 5-10 10z" fill="#e8889b"/><path d="M1 12l4 4" stroke="#fff" stroke-width="1.2"/></svg>
<div class="t" style="top:150.1px;font-size:15px;line-height:15px;color:#444;left:1614px;transform-origin:0 50%;transform:scaleX(0.6667);">クリア</div>
<svg style="position:absolute;left:1650px;top:154px;" width="8" height="6" viewBox="0 0 8 6"><path d="M0.5 0.8l3.5 3.5 3.5-3.5" fill="none" stroke="#444" stroke-width="1.3"/></svg>
<div class="t" style="top:91.64px;font-size:16px;line-height:16px;color:#4a89c8;left:1734px;transform-origin:0 50%;transform:scaleX(1.2182);">A</div>
<div class="t" style="top:109.14px;font-size:16px;line-height:16px;color:#8d5fc4;left:1734px;transform-origin:0 50%;transform:scaleX(1.2268);">Z</div>
<svg style="position:absolute;left:1749px;top:98px;" width="19" height="18" viewBox="0 0 19 18"><path d="M0 0h19l-7 8v9h-5V8z" fill="#6e6e6e"/><path d="M9 8v8" stroke="#f3f2f1"/></svg>
<div class="t" style="top:132.4px;font-size:15px;line-height:15px;color:#444;left:1720px;transform-origin:0 50%;transform:scaleX(0.8267);">並べ替えと</div>
<div class="t" style="top:151.6px;font-size:15px;line-height:15px;color:#444;left:1718px;transform-origin:0 50%;transform:scaleX(0.6667);">フィルター</div>
<svg style="position:absolute;left:1775px;top:157px;" width="8" height="6" viewBox="0 0 8 6"><path d="M0.5 0.8l3.5 3.5 3.5-3.5" fill="none" stroke="#444" stroke-width="1.3"/></svg>
<svg style="position:absolute;left:1796px;top:91px;" width="35" height="35" viewBox="0 0 35 35"><circle cx="22" cy="12" r="10" fill="#fff" stroke="#4a89c8" stroke-width="3"/><path d="M14 19L3 31" stroke="#4a89c8" stroke-width="4.5" stroke-linecap="round"/></svg>
<div class="t" style="top:132.4px;font-size:15px;line-height:15px;color:#444;left:1793px;transform-origin:0 50%;transform:scaleX(0.8444);">検索と</div>
<div class="t" style="top:151.6px;font-size:15px;line-height:15px;color:#444;left:1791px;transform-origin:0 50%;transform:scaleX(0.9333);">選択</div>
<svg style="position:absolute;left:1826px;top:157px;" width="8" height="6" viewBox="0 0 8 6"><path d="M0.5 0.8l3.5 3.5 3.5-3.5" fill="none" stroke="#444" stroke-width="1.3"/></svg>
<div style="left:6px;top:215px;width:127px;height:36px;background:#fff;border:1px solid #c6c6c6"></div>
<div class="t" style="top:226.68px;font-size:17px;line-height:17px;color:#444;left:14px;transform-origin:0 50%;transform:scaleX(0.9575);">T3</div>
<svg style="position:absolute;left:117px;top:231px;" width="8" height="4" viewBox="0 0 8 4"><path d="M0 0h8L4 4z" fill="#666"/></svg>
<div style="left:150px;top:226px;width:4px;height:3px;background:#a0a0a0;"></div>
<div style="left:150px;top:231px;width:4px;height:3px;background:#a0a0a0;"></div>
<div style="left:150px;top:236px;width:4px;height:3px;background:#a0a0a0;"></div>
<div style="left:170px;top:215px;width:137px;height:36px;background:#fff;border:1px solid #c6c6c6"></div>
<svg style="position:absolute;left:184px;top:225px;" width="16" height="16" viewBox="0 0 16 16"><path d="M1 1l14 14M15 1L1 15" stroke="#c0c0c0" stroke-width="1.6"/></svg>
<svg style="position:absolute;left:229px;top:224px;" width="19" height="18" viewBox="0 0 19 18"><path d="M1 10l6 6L18 2" fill="none" stroke="#c8c8c8" stroke-width="2.6"/></svg>
<div class="t" style="top:224.26px;font-size:19px;line-height:19px;color:#555;font-weight:700;font-family:'Liberation Serif',serif;left:274px;transform-origin:0 50%;transform:scaleX(1.0740);"><i>fx</i></div>
<div style="left:310px;top:215px;width:1604px;height:36px;background:#fff;border:1px solid #c6c6c6"></div>
<div class="t" style="top:224.68px;font-size:17px;line-height:17px;color:#444;left:326px;transform-origin:0 50%;transform:scaleX(0.9972);">43.8</div>
<svg style="position:absolute;left:1899px;top:230px;" width="11" height="7" viewBox="0 0 11 7"><path d="M1 1l4.5 4.5L10 1" fill="none" stroke="#666" stroke-width="2"/></svg>
<div style="left:37px;top:293px;width:1857px;height:682px;background:#ffffff;"></div>
<div style="left:0px;top:263px;width:36px;height:712px;background:#e6e6e6;"></div>
<div style="left:0px;top:263px;width:1894px;height:29px;background:#e6e6e6;"></div>
<div style="left:37px;top:322px;width:1857px;height:1px;background:#d4d4d4;"></div>
<div style="left:37px;top:352px;width:1857px;height:1px;background:#d4d4d4;"></div>
<div style="left:37px;top:382px;width:1857px;height:1px;background:#d4d4d4;"></div>
<div style="left:37px;top:412px;width:1857px;height:1px;background:#d4d4d4;"></div>
<div style="left:37px;top:442px;width:1857px;height:1px;background:#d4d4d4;"></div>
<div style="left:37px;top:472px;width:1857px;height:1px;background:#d4d4d4;"></div>
<div style="left:37px;top:502px;width:1857px;height:1px;background:#d4d4d4;"></div>
<div style="left:37px;top:532px;width:1857px;height:1px;background:#d4d4d4;"></div>
<div style="left:37px;top:562px;width:1857px;height:1px;background:#d4d4d4;"></div>
<div style="left:37px;top:592px;width:1857px;height:1px;background:#d4d4d4;"></div>
<div style="left:37px;top:622px;width:1857px;height:1px;background:#d4d4d4;"></div>
<div style="left:37px;top:652px;width:1857px;height:1px;background:#d4d4d4;"></div>
<div style="left:37px;top:682px;width:1857px;height:1px;background:#d4d4d4;"></div>
<div style="left:37px;top:712px;width:1857px;height:1px;background:#d4d4d4;"></div>
<div style="left:37px;top:742px;width:1857px;height:1px;background:#d4d4d4;"></div>
<div style="left:37px;top:772px;width:1857px;height:1px;background:#d4d4d4;"></div>
<div style="left:37px;top:802px;width:1857px;height:1px;background:#d4d4d4;"></div>
<div style="left:37px;top:832px;width:1857px;height:1px;background:#d4d4d4;"></div>
<div style="left:37px;top:862px;width:1857px;height:1px;background:#d4d4d4;"></div>
<div style="left:37px;top:892px;width:1857px;height:1px;background:#d4d4d4;"></div>
<div style="left:37px;top:922px;width:1857px;height:1px;background:#d4d4d4;"></div>
<div style="left:37px;top:952px;width:1857px;height:1px;background:#d4d4d4;"></div>
<div style="left:141px;top:293px;width:1px;height:682px;background:#d4d4d4;"></div>
<div style="left:229px;top:293px;width:1px;height:682px;background:#d4d4d4;"></div>
<div style="left:317px;top:293px;width:1px;height:682px;background:#d4d4d4;"></div>
<div style="left:405px;top:293px;width:1px;height:682px;background:#d4d4d4;"></div>
<div style="left:499px;top:293px;width:1px;height:682px;background:#d4d4d4;"></div>
<div style="left:585px;top:293px;width:1px;height:682px;background:#d4d4d4;"></div>
<div style="left:671px;top:293px;width:1px;height:682px;background:#d4d4d4;"></div>
<div style="left:797px;top:293px;width:1px;height:682px;background:#d4d4d4;"></div>
<div style="left:874px;top:293px;width:1px;height:682px;background:#d4d4d4;"></div>
<div style="left:936px;top:293px;width:1px;height:682px;background:#d4d4d4;"></div>
<div style="left:1053px;top:293px;width:1px;height:682px;background:#d4d4d4;"></div>
<div style="left:1133px;top:293px;width:1px;height:682px;background:#d4d4d4;"></div>
<div style="left:1209px;top:293px;width:1px;height:682px;background:#d4d4d4;"></div>
<div style="left:1284px;top:293px;width:1px;height:682px;background:#d4d4d4;"></div>
<div style="left:1358px;top:293px;width:1px;height:682px;background:#d4d4d4;"></div>
<div style="left:1432px;top:293px;width:1px;height:682px;background:#d4d4d4;"></div>
<div style="left:1506px;top:293px;width:1px;height:682px;background:#d4d4d4;"></div>
<div style="left:1578px;top:293px;width:1px;height:682px;background:#d4d4d4;"></div>
<div style="left:1644px;top:293px;width:1px;height:682px;background:#d4d4d4;"></div>
<div style="left:1738px;top:293px;width:1px;height:682px;background:#d4d4d4;"></div>
<div style="left:1826px;top:293px;width:1px;height:682px;background:#d4d4d4;"></div>
<div style="left:141px;top:263px;width:1px;height:29px;background:#a3a3a3;"></div>
<div style="left:229px;top:263px;width:1px;height:29px;background:#a3a3a3;"></div>
<div style="left:317px;top:263px;width:1px;height:29px;background:#a3a3a3;"></div>
<div style="left:405px;top:263px;width:1px;height:29px;background:#a3a3a3;"></div>
<div style="left:499px;top:263px;width:1px;height:29px;background:#a3a3a3;"></div>
<div style="left:585px;top:263px;width:1px;height:29px;background:#a3a3a3;"></div>
<div style="left:671px;top:263px;width:1px;height:29px;background:#a3a3a3;"></div>
<div style="left:797px;top:263px;width:1px;height:29px;background:#a3a3a3;"></div>
<div style="left:874px;top:263px;width:1px;height:29px;background:#a3a3a3;"></div>
<div style="left:936px;top:263px;width:1px;height:29px;background:#a3a3a3;"></div>
<div style="left:1053px;top:263px;width:1px;height:29px;background:#a3a3a3;"></div>
<div style="left:1133px;top:263px;width:1px;height:29px;background:#a3a3a3;"></div>
<div style="left:1209px;top:263px;width:1px;height:29px;background:#a3a3a3;"></div>
<div style="left:1284px;top:263px;width:1px;height:29px;background:#a3a3a3;"></div>
<div style="left:1358px;top:263px;width:1px;height:29px;background:#a3a3a3;"></div>
<div style="left:1432px;top:263px;width:1px;height:29px;background:#a3a3a3;"></div>
<div style="left:1506px;top:263px;width:1px;height:29px;background:#a3a3a3;"></div>
<div style="left:1578px;top:263px;width:1px;height:29px;background:#a3a3a3;"></div>
<div style="left:1644px;top:263px;width:1px;height:29px;background:#a3a3a3;"></div>
<div style="left:1738px;top:263px;width:1px;height:29px;background:#a3a3a3;"></div>
<div style="left:1826px;top:263px;width:1px;height:29px;background:#a3a3a3;"></div>
<div style="left:1894px;top:292px;width:1px;height:683px;background:#9a9a9a;"></div>
<div style="left:0px;top:322px;width:36px;height:1px;background:#c8c8c8;"></div>
<div style="left:0px;top:352px;width:36px;height:1px;background:#c8c8c8;"></div>
<div style="left:0px;top:382px;width:36px;height:1px;background:#c8c8c8;"></div>
<div style="left:0px;top:412px;width:36px;height:1px;background:#c8c8c8;"></div>
<div style="left:0px;top:442px;width:36px;height:1px;background:#c8c8c8;"></div>
<div style="left:0px;top:472px;width:36px;height:1px;background:#c8c8c8;"></div>
<div style="left:0px;top:502px;width:36px;height:1px;background:#c8c8c8;"></div>
<div style="left:0px;top:532px;width:36px;height:1px;background:#c8c8c8;"></div>
<div style="left:0px;top:562px;width:36px;height:1px;background:#c8c8c8;"></div>
<div style="left:0px;top:592px;width:36px;height:1px;background:#c8c8c8;"></div>
<div style="left:0px;top:622px;width:36px;height:1px;background:#c8c8c8;"></div>
<div style="left:0px;top:652px;width:36px;height:1px;background:#c8c8c8;"></div>
<div style="left:0px;top:682px;width:36px;height:1px;background:#c8c8c8;"></div>
<div style="left:0px;top:712px;width:36px;height:1px;background:#c8c8c8;"></div>
<div style="left:0px;top:742px;width:36px;height:1px;background:#c8c8c8;"></div>
<div style="left:0px;top:772px;width:36px;height:1px;background:#c8c8c8;"></div>
<div style="left:0px;top:802px;width:36px;height:1px;background:#c8c8c8;"></div>
<div style="left:0px;top:832px;width:36px;height:1px;background:#c8c8c8;"></div>
<div style="left:0px;top:862px;width:36px;height:1px;background:#c8c8c8;"></div>
<div style="left:0px;top:892px;width:36px;height:1px;background:#c8c8c8;"></div>
<div style="left:0px;top:922px;width:36px;height:1px;background:#c8c8c8;"></div>
<div style="left:0px;top:952px;width:36px;height:1px;background:#c8c8c8;"></div>
<div style="left:0px;top:982px;width:36px;height:1px;background:#c8c8c8;"></div>
<div style="left:1209px;top:292px;width:76px;height:31px;background:#c6efce;"></div>
<div style="left:1358px;top:292px;width:75px;height:31px;background:#c6efce;"></div>
<div style="left:1506px;top:292px;width:73px;height:31px;background:#c6efce;"></div>
<div style="left:1644px;top:292px;width:95px;height:31px;background:#c6efce;"></div>
<div style="left:797px;top:292px;width:78px;height:31px;background:#ffc7ce;"></div>
<div style="left:499px;top:322px;width:87px;height:31px;background:#f9f7fa;"></div>
<div style="left:585px;top:322px;width:87px;height:31px;background:#f9f7fa;"></div>
<div style="left:797px;top:322px;width:78px;height:31px;background:#c6efce;"></div>
<div style="left:1209px;top:322px;width:76px;height:31px;background:#ffc7ce;"></div>
<div style="left:1358px;top:322px;width:75px;height:31px;background:#ffc7ce;"></div>
<div style="left:1506px;top:322px;width:73px;height:31px;background:#c6efce;"></div>
<div style="left:1578px;top:322px;width:67px;height:31px;background:#70ad47;"></div>
<div style="left:1644px;top:322px;width:95px;height:31px;background:#c6efce;"></div>
<div style="left:499px;top:352px;width:87px;height:31px;background:#f8f9fb;"></div>
<div style="left:585px;top:352px;width:87px;height:31px;background:#f9f9fc;"></div>
<div style="left:797px;top:352px;width:78px;height:31px;background:#c6efce;"></div>
<div style="left:1209px;top:352px;width:76px;height:31px;background:#ffc7ce;"></div>
<div style="left:1358px;top:352px;width:75px;height:31px;background:#ffc7ce;"></div>
<div style="left:1506px;top:352px;width:73px;height:31px;background:#c6efce;"></div>
<div style="left:1578px;top:352px;width:67px;height:31px;background:#70ad47;"></div>
<div style="left:1644px;top:352px;width:95px;height:31px;background:#c6efce;"></div>
<div style="left:499px;top:382px;width:87px;height:31px;background:#f9dfe3;"></div>
<div style="left:585px;top:382px;width:87px;height:31px;background:#f9e8eb;"></div>
<div style="left:797px;top:382px;width:78px;height:31px;background:#ffc7ce;"></div>
<div style="left:1209px;top:382px;width:76px;height:31px;background:#ffc7ce;"></div>
<div style="left:1358px;top:382px;width:75px;height:31px;background:#ffc7ce;"></div>
<div style="left:1506px;top:382px;width:73px;height:31px;background:#c6efce;"></div>
<div style="left:1578px;top:382px;width:67px;height:31px;background:#70ad47;"></div>
<div style="left:1644px;top:382px;width:95px;height:31px;background:#c6efce;"></div>
<div style="left:499px;top:412px;width:87px;height:31px;background:#f9c5c9;"></div>
<div style="left:585px;top:412px;width:87px;height:31px;background:#f9d7da;"></div>
<div style="left:797px;top:412px;width:78px;height:31px;background:#ffc7ce;"></div>
<div style="left:1209px;top:412px;width:76px;height:31px;background:#ffc7ce;"></div>
<div style="left:1358px;top:412px;width:75px;height:31px;background:#c6efce;"></div>
<div style="left:1506px;top:412px;width:73px;height:31px;background:#c6efce;"></div>
<div style="left:1578px;top:412px;width:67px;height:31px;background:#70ad47;"></div>
<div style="left:1644px;top:412px;width:95px;height:31px;background:#c6efce;"></div>
<div style="left:499px;top:442px;width:87px;height:31px;background:#d9ece0;"></div>
<div style="left:585px;top:442px;width:87px;height:31px;background:#e1efe7;"></div>
<div style="left:797px;top:442px;width:78px;height:31px;background:#c6efce;"></div>
<div style="left:1209px;top:442px;width:76px;height:31px;background:#c6efce;"></div>
<div style="left:1358px;top:442px;width:75px;height:31px;background:#c6efce;"></div>
<div style="left:1506px;top:442px;width:73px;height:31px;background:#c6efce;"></div>
<div style="left:1578px;top:442px;width:67px;height:31px;background:#70ad47;"></div>
<div style="left:1644px;top:442px;width:95px;height:31px;background:#c6efce;"></div>
<div style="left:499px;top:472px;width:87px;height:31px;background:#d4eadc;"></div>
<div style="left:585px;top:472px;width:87px;height:31px;background:#deeee5;"></div>
<div style="left:797px;top:472px;width:78px;height:31px;background:#c6efce;"></div>
<div style="left:1209px;top:472px;width:76px;height:31px;background:#c6efce;"></div>
<div style="left:1358px;top:472px;width:75px;height:31px;background:#c6efce;"></div>
<div style="left:1506px;top:472px;width:73px;height:31px;background:#c6efce;"></div>
<div style="left:1578px;top:472px;width:67px;height:31px;background:#70ad47;"></div>
<div style="left:1644px;top:472px;width:95px;height:31px;background:#c6efce;"></div>
<div style="left:499px;top:502px;width:87px;height:31px;background:#f9e7eb;"></div>
<div style="left:585px;top:502px;width:87px;height:31px;background:#f9eef1;"></div>
<div style="left:797px;top:502px;width:78px;height:31px;background:#ffc7ce;"></div>
<div style="left:1209px;top:502px;width:76px;height:31px;background:#c6efce;"></div>
<div style="left:1358px;top:502px;width:75px;height:31px;background:#c6efce;"></div>
<div style="left:1506px;top:502px;width:73px;height:31px;background:#c6efce;"></div>
<div style="left:1578px;top:502px;width:67px;height:31px;background:#70ad47;"></div>
<div style="left:1644px;top:502px;width:95px;height:31px;background:#c6efce;"></div>
<div style="left:499px;top:532px;width:87px;height:31px;background:#edf4f2;"></div>
<div style="left:585px;top:532px;width:87px;height:31px;background:#eff5f4;"></div>
<div style="left:797px;top:532px;width:78px;height:31px;background:#c6efce;"></div>
<div style="left:874px;top:532px;width:63px;height:31px;background:#5b9bd5;"></div>
<div style="left:1209px;top:532px;width:76px;height:31px;background:#c6efce;"></div>
<div style="left:1358px;top:532px;width:75px;height:31px;background:#c6efce;"></div>
<div style="left:1506px;top:532px;width:73px;height:31px;background:#c6efce;"></div>
<div style="left:1578px;top:532px;width:67px;height:31px;background:#70ad47;"></div>
<div style="left:1644px;top:532px;width:95px;height:31px;background:#c6efce;"></div>
<div style="left:499px;top:562px;width:87px;height:31px;background:#c1e2cc;"></div>
<div style="left:585px;top:562px;width:87px;height:31px;background:#d2e9da;"></div>
<div style="left:797px;top:562px;width:78px;height:31px;background:#c6efce;"></div>
<div style="left:874px;top:562px;width:63px;height:31px;background:#5b9bd5;"></div>
<div style="left:1209px;top:562px;width:76px;height:31px;background:#c6efce;"></div>
<div style="left:1358px;top:562px;width:75px;height:31px;background:#c6efce;"></div>
<div style="left:1506px;top:562px;width:73px;height:31px;background:#c6efce;"></div>
<div style="left:1644px;top:562px;width:95px;height:31px;background:#c6efce;"></div>
<div style="left:499px;top:592px;width:87px;height:31px;background:#f4f7f8;"></div>
<div style="left:585px;top:592px;width:87px;height:31px;background:#f7f8fa;"></div>
<div style="left:797px;top:592px;width:78px;height:31px;background:#c6efce;"></div>
<div style="left:874px;top:592px;width:63px;height:31px;background:#5b9bd5;"></div>
<div style="left:1209px;top:592px;width:76px;height:31px;background:#ffc7ce;"></div>
<div style="left:1358px;top:592px;width:75px;height:31px;background:#ffc7ce;"></div>
<div style="left:1506px;top:592px;width:73px;height:31px;background:#c6efce;"></div>
<div style="left:1644px;top:592px;width:95px;height:31px;background:#c6efce;"></div>
<div style="left:499px;top:622px;width:87px;height:31px;background:#f3f6f6;"></div>
<div style="left:585px;top:622px;width:87px;height:31px;background:#f4f7f8;"></div>
<div style="left:797px;top:622px;width:78px;height:31px;background:#c6efce;"></div>
<div style="left:874px;top:622px;width:63px;height:31px;background:#5b9bd5;"></div>
<div style="left:1209px;top:622px;width:76px;height:31px;background:#ffc7ce;"></div>
<div style="left:1358px;top:622px;width:75px;height:31px;background:#ffc7ce;"></div>
<div style="left:1506px;top:622px;width:73px;height:31px;background:#c6efce;"></div>
<div style="left:1578px;top:622px;width:67px;height:31px;background:#70ad47;"></div>
<div style="left:1644px;top:622px;width:95px;height:31px;background:#c6efce;"></div>
<div style="left:499px;top:652px;width:87px;height:31px;background:#f9e5e9;"></div>
<div style="left:585px;top:652px;width:87px;height:31px;background:#f9ecef;"></div>
<div style="left:797px;top:652px;width:78px;height:31px;background:#ffc7ce;"></div>
<div style="left:874px;top:652px;width:63px;height:31px;background:#ffc000;"></div>
<div style="left:1209px;top:652px;width:76px;height:31px;background:#ffc7ce;"></div>
<div style="left:1358px;top:652px;width:75px;height:31px;background:#ffc7ce;"></div>
<div style="left:1506px;top:652px;width:73px;height:31px;background:#c6efce;"></div>
<div style="left:1578px;top:652px;width:67px;height:31px;background:#70ad47;"></div>
<div style="left:1644px;top:652px;width:95px;height:31px;background:#c6efce;"></div>
<div style="left:499px;top:682px;width:87px;height:31px;background:#f9f2f5;"></div>
<div style="left:585px;top:682px;width:87px;height:31px;background:#f9f5f8;"></div>
<div style="left:797px;top:682px;width:78px;height:31px;background:#ffc7ce;"></div>
<div style="left:874px;top:682px;width:63px;height:31px;background:#ffc000;"></div>
<div style="left:1209px;top:682px;width:76px;height:31px;background:#ffc7ce;"></div>
<div style="left:1358px;top:682px;width:75px;height:31px;background:#c6efce;"></div>
<div style="left:1506px;top:682px;width:73px;height:31px;background:#c6efce;"></div>
<div style="left:1578px;top:682px;width:67px;height:31px;background:#70ad47;"></div>
<div style="left:1644px;top:682px;width:95px;height:31px;background:#c6efce;"></div>
<div style="left:499px;top:712px;width:87px;height:31px;background:#f9eff2;"></div>
<div style="left:585px;top:712px;width:87px;height:31px;background:#f9f3f6;"></div>
<div style="left:797px;top:712px;width:78px;height:31px;background:#ffc7ce;"></div>
<div style="left:874px;top:712px;width:63px;height:31px;background:#ffc000;"></div>
<div style="left:1209px;top:712px;width:76px;height:31px;background:#ffc7ce;"></div>
<div style="left:1358px;top:712px;width:75px;height:31px;background:#c6efce;"></div>
<div style="left:1506px;top:712px;width:73px;height:31px;background:#c6efce;"></div>
<div style="left:1578px;top:712px;width:67px;height:31px;background:#70ad47;"></div>
<div style="left:1644px;top:712px;width:95px;height:31px;background:#c6efce;"></div>
<div style="left:499px;top:742px;width:87px;height:31px;background:#f9e9ed;"></div>
<div style="left:585px;top:742px;width:87px;height:31px;background:#f9f0f3;"></div>
<div style="left:797px;top:742px;width:78px;height:31px;background:#ffc7ce;"></div>
<div style="left:874px;top:742px;width:63px;height:31px;background:#ffc000;"></div>
<div style="left:1209px;top:742px;width:76px;height:31px;background:#ffc7ce;"></div>
<div style="left:1358px;top:742px;width:75px;height:31px;background:#c6efce;"></div>
<div style="left:1506px;top:742px;width:73px;height:31px;background:#c6efce;"></div>
<div style="left:1578px;top:742px;width:67px;height:31px;background:#70ad47;"></div>
<div style="left:1644px;top:742px;width:95px;height:31px;background:#c6efce;"></div>
<div style="left:499px;top:772px;width:87px;height:31px;background:#f2f6f6;"></div>
<div style="left:585px;top:772px;width:87px;height:31px;background:#f4f7f8;"></div>
<div style="left:797px;top:772px;width:78px;height:31px;background:#c6efce;"></div>
<div style="left:1209px;top:772px;width:76px;height:31px;background:#c6efce;"></div>
<div style="left:1358px;top:772px;width:75px;height:31px;background:#c6efce;"></div>
<div style="left:1506px;top:772px;width:73px;height:31px;background:#c6efce;"></div>
<div style="left:1578px;top:772px;width:67px;height:31px;background:#70ad47;"></div>
<div style="left:1644px;top:772px;width:95px;height:31px;background:#c6efce;"></div>
<div style="left:499px;top:802px;width:87px;height:31px;background:#e8f2ed;"></div>
<div style="left:585px;top:802px;width:87px;height:31px;background:#edf4f1;"></div>
<div style="left:797px;top:802px;width:78px;height:31px;background:#ffc7ce;"></div>
<div style="left:1209px;top:802px;width:76px;height:31px;background:#ffc7ce;"></div>
<div style="left:1358px;top:802px;width:75px;height:31px;background:#c6efce;"></div>
<div style="left:1506px;top:802px;width:73px;height:31px;background:#c6efce;"></div>
<div style="left:1578px;top:802px;width:67px;height:31px;background:#70ad47;"></div>
<div style="left:1644px;top:802px;width:95px;height:31px;background:#c6efce;"></div>
<div style="left:499px;top:832px;width:87px;height:31px;background:#f9c3c7;"></div>
<div style="left:585px;top:832px;width:87px;height:31px;background:#f9d7da;"></div>
<div style="left:797px;top:832px;width:78px;height:31px;background:#ffc7ce;"></div>
<div style="left:1209px;top:832px;width:76px;height:31px;background:#ffc7ce;"></div>
<div style="left:1358px;top:832px;width:75px;height:31px;background:#c6efce;"></div>
<div style="left:1506px;top:832px;width:73px;height:31px;background:#c6efce;"></div>
<div style="left:1578px;top:832px;width:67px;height:31px;background:#70ad47;"></div>
<div style="left:1644px;top:832px;width:95px;height:31px;background:#c6efce;"></div>
<div style="left:499px;top:862px;width:87px;height:31px;background:#bde0c8;"></div>
<div style="left:585px;top:862px;width:87px;height:31px;background:#cde7d6;"></div>
<div style="left:797px;top:862px;width:78px;height:31px;background:#c6efce;"></div>
<div style="left:1209px;top:862px;width:76px;height:31px;background:#c6efce;"></div>
<div style="left:1358px;top:862px;width:75px;height:31px;background:#c6efce;"></div>
<div style="left:1506px;top:862px;width:73px;height:31px;background:#c6efce;"></div>
<div style="left:1578px;top:862px;width:67px;height:31px;background:#70ad47;"></div>
<div style="left:1644px;top:862px;width:95px;height:31px;background:#c6efce;"></div>
<div style="left:499px;top:892px;width:87px;height:31px;background:#f9e3e7;"></div>
<div style="left:585px;top:892px;width:87px;height:31px;background:#f9ecef;"></div>
<div style="left:797px;top:892px;width:78px;height:31px;background:#ffc7ce;"></div>
<div style="left:1209px;top:892px;width:76px;height:31px;background:#ffc7ce;"></div>
<div style="left:1358px;top:892px;width:75px;height:31px;background:#c6efce;"></div>
<div style="left:1506px;top:892px;width:73px;height:31px;background:#c6efce;"></div>
<div style="left:1578px;top:892px;width:67px;height:31px;background:#70ad47;"></div>
<div style="left:1644px;top:892px;width:95px;height:31px;background:#c6efce;"></div>
<div style="left:499px;top:922px;width:87px;height:31px;background:#cae6d3;"></div>
<div style="left:585px;top:922px;width:87px;height:31px;background:#d7ebde;"></div>
<div style="left:797px;top:922px;width:78px;height:31px;background:#c6efce;"></div>
<div style="left:1209px;top:922px;width:76px;height:31px;background:#c6efce;"></div>
<div style="left:1358px;top:922px;width:75px;height:31px;background:#c6efce;"></div>
<div style="left:1506px;top:922px;width:73px;height:31px;background:#c6efce;"></div>
<div style="left:1578px;top:922px;width:67px;height:31px;background:#70ad47;"></div>
<div style="left:1644px;top:922px;width:95px;height:31px;background:#c6efce;"></div>
<div style="left:499px;top:952px;width:87px;height:31px;background:#f9eaed;"></div>
<div style="left:585px;top:952px;width:87px;height:31px;background:#f9f0f3;"></div>
<div style="left:797px;top:952px;width:78px;height:31px;background:#ffc7ce;"></div>
<div style="left:1209px;top:952px;width:76px;height:31px;background:#ffc7ce;"></div>
<div style="left:1358px;top:952px;width:75px;height:31px;background:#c6efce;"></div>
<div style="left:1506px;top:952px;width:73px;height:31px;background:#c6efce;"></div>
<div style="left:1578px;top:952px;width:67px;height:31px;background:#70ad47;"></div>
<div style="left:1644px;top:952px;width:95px;height:31px;background:#c6efce;"></div>
<div class="t" style="top:298.92px;font-size:18px;line-height:18px;color:#282828;left:-211.0px;width:600px;text-align:center;transform-origin:50% 50%;">本日</div>
<div class="t" style="top:298.92px;font-size:18px;line-height:18px;color:#282828;left:-114.5px;width:600px;text-align:center;transform-origin:50% 50%;">始値</div>
<div class="t" style="top:298.92px;font-size:18px;line-height:18px;color:#282828;left:-26.5px;width:600px;text-align:center;transform-origin:50% 50%;">高値</div>
<div class="t" style="top:298.92px;font-size:18px;line-height:18px;color:#282828;left:61.5px;width:600px;text-align:center;transform-origin:50% 50%;">安値</div>
<div class="t" style="top:298.92px;font-size:18px;line-height:18px;color:#282828;left:152.5px;width:600px;text-align:center;transform-origin:50% 50%;">終値</div>
<div class="t" style="top:298.92px;font-size:18px;line-height:18px;color:#282828;left:242.5px;width:600px;text-align:center;transform-origin:50% 50%;">前日比</div>
<div class="t" style="top:298.92px;font-size:18px;line-height:18px;color:#282828;left:328.5px;width:600px;text-align:center;transform-origin:50% 50%;">前日比%</div>
<div class="t" style="top:298.92px;font-size:18px;line-height:18px;color:#282828;left:434.5px;width:600px;text-align:center;transform-origin:50% 50%;">売買高(株)</div>
<div class="t" style="top:298.92px;font-size:18px;line-height:18px;color:#a5121c;left:536.0px;width:600px;text-align:center;transform-origin:50% 50%;">陽線陰線</div>
<div class="t" style="top:298.92px;font-size:18px;line-height:18px;color:#282828;left:605.5px;width:600px;text-align:center;transform-origin:50% 50%;">連続数</div>
<div class="t" style="top:298.92px;font-size:18px;line-height:18px;color:#282828;left:695.0px;width:600px;text-align:center;transform-origin:50% 50%;">終値前日比較</div>
<div class="t" style="top:298.92px;font-size:18px;line-height:18px;color:#282828;left:793.5px;width:600px;text-align:center;transform-origin:50% 50%;">上幅下幅</div>
<div class="t" style="top:298.92px;font-size:18px;line-height:18px;color:#282828;left:1137px;transform-origin:0 50%;">5日比較</div>
<div class="t" style="top:298.92px;font-size:18px;line-height:18px;color:#282828;left:1288px;transform-origin:0 50%;">25日比較</div>
<div class="t" style="top:298.92px;font-size:18px;line-height:18px;color:#282828;left:1436px;transform-origin:0 50%;">60日比</div>
<div style="left:1579px;top:293px;width:65px;height:29px;overflow:hidden"><div class="t" style="left:3px;top:6.5px;font-size:17px;line-height:17px;color:#1a1a1a;letter-spacing:1px">トレンド</div></div>
<div class="t" style="top:298.92px;font-size:18px;line-height:18px;color:#0c6a14;left:1647px;transform-origin:0 50%;">空売り比率</div>
<div class="t" style="top:329.82px;font-size:18px;line-height:18px;color:#282828;left:-211.0px;width:600px;text-align:center;transform-origin:50% 50%;letter-spacing:0.9px">2021/8/26</div>
<div class="t" style="top:329.82px;font-size:18px;line-height:18px;color:#282828;left:-114.5px;width:600px;text-align:center;transform-origin:50% 50%;">27,793.63</div>
<div class="t" style="top:329.82px;font-size:18px;line-height:18px;color:#282828;left:-26.5px;width:600px;text-align:center;transform-origin:50% 50%;">27,828.28</div>
<div class="t" style="top:329.82px;font-size:18px;line-height:18px;color:#282828;left:61.5px;width:600px;text-align:center;transform-origin:50% 50%;">27,684.50</div>
<div class="t" style="top:329.82px;font-size:18px;line-height:18px;color:#282828;left:152.5px;width:600px;text-align:center;transform-origin:50% 50%;">27,742.29</div>
<div class="t" style="top:329.82px;font-size:18px;line-height:18px;color:#282828;left:242.5px;width:600px;text-align:center;transform-origin:50% 50%;">17.49</div>
<div class="t" style="top:329.82px;font-size:18px;line-height:18px;color:#282828;left:328.5px;width:600px;text-align:center;transform-origin:50% 50%;">0.1</div>
<div class="t" style="top:329.82px;font-size:18px;line-height:18px;color:#282828;left:434.5px;width:600px;text-align:center;transform-origin:50% 50%;">733,452,500</div>
<div class="t" style="top:328.92px;font-size:18px;line-height:18px;color:#0c6a14;left:536.0px;width:600px;text-align:center;transform-origin:50% 50%;">陰</div>
<div class="t" style="top:329.82px;font-size:18px;line-height:18px;color:#282828;left:605.5px;width:600px;text-align:center;transform-origin:50% 50%;">2</div>
<div class="t" style="top:329.82px;font-size:18px;line-height:18px;color:#282828;right:870.5px;transform-origin:100% 50%;">10.19</div>
<div class="t" style="top:329.82px;font-size:18px;line-height:18px;color:#282828;right:714.5px;transform-origin:100% 50%;">27541</div>
<div class="t" style="top:329.82px;font-size:18px;line-height:18px;color:#a5121c;right:639.5px;transform-origin:100% 50%;">1.0073</div>
<div class="t" style="top:329.82px;font-size:18px;line-height:18px;color:#282828;right:565.5px;transform-origin:100% 50%;">27656</div>
<div class="t" style="top:329.82px;font-size:18px;line-height:18px;color:#a5121c;right:491.5px;transform-origin:100% 50%;">1.0031</div>
<div class="t" style="top:329.82px;font-size:18px;line-height:18px;color:#282828;right:417.5px;transform-origin:100% 50%;">28286</div>
<div class="t" style="top:329.82px;font-size:18px;line-height:18px;color:#0c6a14;right:345.5px;transform-origin:100% 50%;">0.9808</div>
<div class="t" style="top:328.92px;font-size:18px;line-height:18px;color:#282828;left:1582px;transform-origin:0 50%;">下降</div>
<div class="t" style="top:329.82px;font-size:18px;line-height:18px;color:#0c6a14;right:185.5px;transform-origin:100% 50%;">43.8</div>
<svg style="position:absolute;left:1285px;top:323px;" width="7" height="6" viewBox="0 0 7 6"><path d="M0 0h7L0 6z" fill="#008000"/></svg>
<svg style="position:absolute;left:1433px;top:323px;" width="7" height="6" viewBox="0 0 7 6"><path d="M0 0h7L0 6z" fill="#008000"/></svg>
<div class="t" style="top:359.82px;font-size:18px;line-height:18px;color:#282828;left:-211.0px;width:600px;text-align:center;transform-origin:50% 50%;letter-spacing:0.9px">2021/8/25</div>
<div class="t" style="top:359.82px;font-size:18px;line-height:18px;color:#282828;left:-114.5px;width:600px;text-align:center;transform-origin:50% 50%;">27,768.13</div>
<div class="t" style="top:359.82px;font-size:18px;line-height:18px;color:#282828;left:-26.5px;width:600px;text-align:center;transform-origin:50% 50%;">27,897.72</div>
<div class="t" style="top:359.82px;font-size:18px;line-height:18px;color:#282828;left:61.5px;width:600px;text-align:center;transform-origin:50% 50%;">27,684.05</div>
<div class="t" style="top:359.82px;font-size:18px;line-height:18px;color:#282828;left:152.5px;width:600px;text-align:center;transform-origin:50% 50%;">27,724.80</div>
<div class="t" style="top:359.82px;font-size:18px;line-height:18px;color:#282828;left:242.5px;width:600px;text-align:center;transform-origin:50% 50%;">-7.3</div>
<div class="t" style="top:359.82px;font-size:18px;line-height:18px;color:#282828;left:328.5px;width:600px;text-align:center;transform-origin:50% 50%;">0</div>
<div class="t" style="top:359.82px;font-size:18px;line-height:18px;color:#282828;left:434.5px;width:600px;text-align:center;transform-origin:50% 50%;">807,829,600</div>
<div class="t" style="top:358.92px;font-size:18px;line-height:18px;color:#0c6a14;left:536.0px;width:600px;text-align:center;transform-origin:50% 50%;">陰</div>
<div class="t" style="top:359.82px;font-size:18px;line-height:18px;color:#282828;left:605.5px;width:600px;text-align:center;transform-origin:50% 50%;">1</div>
<div class="t" style="top:359.82px;font-size:18px;line-height:18px;color:#282828;right:870.5px;transform-origin:100% 50%;">-7.3</div>
<div class="t" style="top:359.82px;font-size:18px;line-height:18px;color:#282828;right:714.5px;transform-origin:100% 50%;">27449</div>
<div class="t" style="top:359.82px;font-size:18px;line-height:18px;color:#a5121c;right:639.5px;transform-origin:100% 50%;">1.01</div>
<div class="t" style="top:359.82px;font-size:18px;line-height:18px;color:#282828;right:565.5px;transform-origin:100% 50%;">27653</div>
<div class="t" style="top:359.82px;font-size:18px;line-height:18px;color:#a5121c;right:491.5px;transform-origin:100% 50%;">1.0026</div>
<div class="t" style="top:359.82px;font-size:18px;line-height:18px;color:#282828;right:417.5px;transform-origin:100% 50%;">28304</div>
<div class="t" style="top:359.82px;font-size:18px;line-height:18px;color:#0c6a14;right:345.5px;transform-origin:100% 50%;">0.9795</div>
<div class="t" style="top:358.92px;font-size:18px;line-height:18px;color:#282828;left:1582px;transform-origin:0 50%;">下降</div>
<div class="t" style="top:359.82px;font-size:18px;line-height:18px;color:#0c6a14;right:185.5px;transform-origin:100% 50%;">43.8</div>
<svg style="position:absolute;left:1285px;top:353px;" width="7" height="6" viewBox="0 0 7 6"><path d="M0 0h7L0 6z" fill="#008000"/></svg>
<svg style="position:absolute;left:1433px;top:353px;" width="7" height="6" viewBox="0 0 7 6"><path d="M0 0h7L0 6z" fill="#008000"/></svg>
<div class="t" style="top:389.82px;font-size:18px;line-height:18px;color:#282828;left:-211.0px;width:600px;text-align:center;transform-origin:50% 50%;letter-spacing:0.9px">2021/8/24</div>
<div class="t" style="top:389.82px;font-size:18px;line-height:18px;color:#282828;left:-114.5px;width:600px;text-align:center;transform-origin:50% 50%;">27,653.23</div>
<div class="t" style="top:389.82px;font-size:18px;line-height:18px;color:#282828;left:-26.5px;width:600px;text-align:center;transform-origin:50% 50%;">27,817.89</div>
<div class="t" style="top:389.82px;font-size:18px;line-height:18px;color:#282828;left:61.5px;width:600px;text-align:center;transform-origin:50% 50%;">27,653.23</div>
<div class="t" style="top:389.82px;font-size:18px;line-height:18px;color:#282828;left:152.5px;width:600px;text-align:center;transform-origin:50% 50%;">27,732.10</div>
<div class="t" style="top:389.82px;font-size:18px;line-height:18px;color:#282828;left:242.5px;width:600px;text-align:center;transform-origin:50% 50%;">237.86</div>
<div class="t" style="top:389.82px;font-size:18px;line-height:18px;color:#282828;left:328.5px;width:600px;text-align:center;transform-origin:50% 50%;">0.9</div>
<div class="t" style="top:389.82px;font-size:18px;line-height:18px;color:#282828;left:434.5px;width:600px;text-align:center;transform-origin:50% 50%;">805,621,700</div>
<div class="t" style="top:388.92px;font-size:18px;line-height:18px;color:#a5121c;left:536.0px;width:600px;text-align:center;transform-origin:50% 50%;">陽</div>
<div class="t" style="top:389.82px;font-size:18px;line-height:18px;color:#282828;left:605.5px;width:600px;text-align:center;transform-origin:50% 50%;">2</div>
<div class="t" style="top:389.82px;font-size:18px;line-height:18px;color:#282828;right:870.5px;transform-origin:100% 50%;">718.85</div>
<div class="t" style="top:389.82px;font-size:18px;line-height:18px;color:#282828;right:714.5px;transform-origin:100% 50%;">27421</div>
<div class="t" style="top:389.82px;font-size:18px;line-height:18px;color:#a5121c;right:639.5px;transform-origin:100% 50%;">1.0113</div>
<div class="t" style="top:389.82px;font-size:18px;line-height:18px;color:#282828;right:565.5px;transform-origin:100% 50%;">27664</div>
<div class="t" style="top:389.82px;font-size:18px;line-height:18px;color:#a5121c;right:491.5px;transform-origin:100% 50%;">1.0025</div>
<div class="t" style="top:389.82px;font-size:18px;line-height:18px;color:#282828;right:417.5px;transform-origin:100% 50%;">28328</div>
<div class="t" style="top:389.82px;font-size:18px;line-height:18px;color:#0c6a14;right:345.5px;transform-origin:100% 50%;">0.979</div>
<div class="t" style="top:388.92px;font-size:18px;line-height:18px;color:#282828;left:1582px;transform-origin:0 50%;">下降</div>
<div class="t" style="top:389.82px;font-size:18px;line-height:18px;color:#0c6a14;right:185.5px;transform-origin:100% 50%;">43.1</div>
<svg style="position:absolute;left:1285px;top:383px;" width="7" height="6" viewBox="0 0 7 6"><path d="M0 0h7L0 6z" fill="#008000"/></svg>
<svg style="position:absolute;left:1433px;top:383px;" width="7" height="6" viewBox="0 0 7 6"><path d="M0 0h7L0 6z" fill="#008000"/></svg>
<div class="t" style="top:419.82px;font-size:18px;line-height:18px;color:#282828;left:-211.0px;width:600px;text-align:center;transform-origin:50% 50%;letter-spacing:0.9px">2021/8/23</div>
<div class="t" style="top:419.82px;font-size:18px;line-height:18px;color:#282828;left:-114.5px;width:600px;text-align:center;transform-origin:50% 50%;">27,193.10</div>
<div class="t" style="top:419.82px;font-size:18px;line-height:18px;color:#282828;left:-26.5px;width:600px;text-align:center;transform-origin:50% 50%;">27,541.63</div>
<div class="t" style="top:419.82px;font-size:18px;line-height:18px;color:#282828;left:61.5px;width:600px;text-align:center;transform-origin:50% 50%;">27,193.10</div>
<div class="t" style="top:419.82px;font-size:18px;line-height:18px;color:#282828;left:152.5px;width:600px;text-align:center;transform-origin:50% 50%;">27,494.24</div>
<div class="t" style="top:419.82px;font-size:18px;line-height:18px;color:#282828;left:242.5px;width:600px;text-align:center;transform-origin:50% 50%;">480.99</div>
<div class="t" style="top:419.82px;font-size:18px;line-height:18px;color:#282828;left:328.5px;width:600px;text-align:center;transform-origin:50% 50%;">1.8</div>
<div class="t" style="top:419.82px;font-size:18px;line-height:18px;color:#282828;left:434.5px;width:600px;text-align:center;transform-origin:50% 50%;">804,675,800</div>
<div class="t" style="top:418.92px;font-size:18px;line-height:18px;color:#a5121c;left:536.0px;width:600px;text-align:center;transform-origin:50% 50%;">陽</div>
<div class="t" style="top:419.82px;font-size:18px;line-height:18px;color:#282828;left:605.5px;width:600px;text-align:center;transform-origin:50% 50%;">1</div>
<div class="t" style="top:419.82px;font-size:18px;line-height:18px;color:#282828;right:870.5px;transform-origin:100% 50%;">480.99</div>
<div class="t" style="top:419.82px;font-size:18px;line-height:18px;color:#282828;right:714.5px;transform-origin:100% 50%;">27360</div>
<div class="t" style="top:419.82px;font-size:18px;line-height:18px;color:#a5121c;right:639.5px;transform-origin:100% 50%;">1.0049</div>
<div class="t" style="top:419.82px;font-size:18px;line-height:18px;color:#282828;right:565.5px;transform-origin:100% 50%;">27686</div>
<div class="t" style="top:419.82px;font-size:18px;line-height:18px;color:#0c6a14;right:491.5px;transform-origin:100% 50%;">0.9931</div>
<div class="t" style="top:419.82px;font-size:18px;line-height:18px;color:#282828;right:417.5px;transform-origin:100% 50%;">28342</div>
<div class="t" style="top:419.82px;font-size:18px;line-height:18px;color:#0c6a14;right:345.5px;transform-origin:100% 50%;">0.9701</div>
<div class="t" style="top:418.92px;font-size:18px;line-height:18px;color:#282828;left:1582px;transform-origin:0 50%;">下降</div>
<div class="t" style="top:419.82px;font-size:18px;line-height:18px;color:#0c6a14;right:185.5px;transform-origin:100% 50%;">42.7</div>
<svg style="position:absolute;left:1285px;top:413px;" width="7" height="6" viewBox="0 0 7 6"><path d="M0 0h7L0 6z" fill="#008000"/></svg>
<svg style="position:absolute;left:1433px;top:413px;" width="7" height="6" viewBox="0 0 7 6"><path d="M0 0h7L0 6z" fill="#008000"/></svg>
<div class="t" style="top:449.82px;font-size:18px;line-height:18px;color:#282828;left:-211.0px;width:600px;text-align:center;transform-origin:50% 50%;letter-spacing:0.9px">2021/8/20</div>
<div class="t" style="top:449.82px;font-size:18px;line-height:18px;color:#282828;left:-114.5px;width:600px;text-align:center;transform-origin:50% 50%;">27,238.45</div>
<div class="t" style="top:449.82px;font-size:18px;line-height:18px;color:#282828;left:-26.5px;width:600px;text-align:center;transform-origin:50% 50%;">27,316.79</div>
<div class="t" style="top:449.82px;font-size:18px;line-height:18px;color:#282828;left:61.5px;width:600px;text-align:center;transform-origin:50% 50%;">26,954.81</div>
<div class="t" style="top:449.82px;font-size:18px;line-height:18px;color:#282828;left:152.5px;width:600px;text-align:center;transform-origin:50% 50%;">27,013.25</div>
<div class="t" style="top:449.82px;font-size:18px;line-height:18px;color:#282828;left:242.5px;width:600px;text-align:center;transform-origin:50% 50%;">-267.92</div>
<div class="t" style="top:449.82px;font-size:18px;line-height:18px;color:#282828;left:328.5px;width:600px;text-align:center;transform-origin:50% 50%;">-1</div>
<div class="t" style="top:449.82px;font-size:18px;line-height:18px;color:#282828;left:434.5px;width:600px;text-align:center;transform-origin:50% 50%;">1,089,677,900</div>
<div class="t" style="top:448.92px;font-size:18px;line-height:18px;color:#0c6a14;left:536.0px;width:600px;text-align:center;transform-origin:50% 50%;">陰</div>
<div class="t" style="top:449.82px;font-size:18px;line-height:18px;color:#282828;left:605.5px;width:600px;text-align:center;transform-origin:50% 50%;">2</div>
<div class="t" style="top:449.82px;font-size:18px;line-height:18px;color:#282828;right:870.5px;transform-origin:100% 50%;">-572.66</div>
<div class="t" style="top:449.82px;font-size:18px;line-height:18px;color:#282828;right:714.5px;transform-origin:100% 50%;">27364</div>
<div class="t" style="top:449.82px;font-size:18px;line-height:18px;color:#0c6a14;right:639.5px;transform-origin:100% 50%;">0.9872</div>
<div class="t" style="top:449.82px;font-size:18px;line-height:18px;color:#282828;right:565.5px;transform-origin:100% 50%;">27730</div>
<div class="t" style="top:449.82px;font-size:18px;line-height:18px;color:#0c6a14;right:491.5px;transform-origin:100% 50%;">0.9741</div>
<div class="t" style="top:449.82px;font-size:18px;line-height:18px;color:#282828;right:417.5px;transform-origin:100% 50%;">28361</div>
<div class="t" style="top:449.82px;font-size:18px;line-height:18px;color:#0c6a14;right:345.5px;transform-origin:100% 50%;">0.9525</div>
<div class="t" style="top:448.92px;font-size:18px;line-height:18px;color:#282828;left:1582px;transform-origin:0 50%;">下降</div>
<div class="t" style="top:449.82px;font-size:18px;line-height:18px;color:#0c6a14;right:185.5px;transform-origin:100% 50%;">44.8</div>
<svg style="position:absolute;left:1285px;top:443px;" width="7" height="6" viewBox="0 0 7 6"><path d="M0 0h7L0 6z" fill="#008000"/></svg>
<svg style="position:absolute;left:1433px;top:443px;" width="7" height="6" viewBox="0 0 7 6"><path d="M0 0h7L0 6z" fill="#008000"/></svg>
<div class="t" style="top:479.82px;font-size:18px;line-height:18px;color:#282828;left:-211.0px;width:600px;text-align:center;transform-origin:50% 50%;letter-spacing:0.9px">2021/8/19</div>
<div class="t" style="top:479.82px;font-size:18px;line-height:18px;color:#282828;left:-114.5px;width:600px;text-align:center;transform-origin:50% 50%;">27,398.58</div>
<div class="t" style="top:479.82px;font-size:18px;line-height:18px;color:#282828;left:-26.5px;width:600px;text-align:center;transform-origin:50% 50%;">27,504.80</div>
<div class="t" style="top:479.82px;font-size:18px;line-height:18px;color:#282828;left:61.5px;width:600px;text-align:center;transform-origin:50% 50%;">27,255.58</div>
<div class="t" style="top:479.82px;font-size:18px;line-height:18px;color:#282828;left:152.5px;width:600px;text-align:center;transform-origin:50% 50%;">27,281.17</div>
<div class="t" style="top:479.82px;font-size:18px;line-height:18px;color:#282828;left:242.5px;width:600px;text-align:center;transform-origin:50% 50%;">-304.74</div>
<div class="t" style="top:479.82px;font-size:18px;line-height:18px;color:#282828;left:328.5px;width:600px;text-align:center;transform-origin:50% 50%;">-1.1</div>
<div class="t" style="top:479.82px;font-size:18px;line-height:18px;color:#282828;left:434.5px;width:600px;text-align:center;transform-origin:50% 50%;">944,872,100</div>
<div class="t" style="top:478.92px;font-size:18px;line-height:18px;color:#0c6a14;left:536.0px;width:600px;text-align:center;transform-origin:50% 50%;">陰</div>
<div class="t" style="top:479.82px;font-size:18px;line-height:18px;color:#282828;left:605.5px;width:600px;text-align:center;transform-origin:50% 50%;">1</div>
<div class="t" style="top:479.82px;font-size:18px;line-height:18px;color:#282828;right:870.5px;transform-origin:100% 50%;">-304.74</div>
<div class="t" style="top:479.82px;font-size:18px;line-height:18px;color:#282828;right:714.5px;transform-origin:100% 50%;">27557</div>
<div class="t" style="top:479.82px;font-size:18px;line-height:18px;color:#0c6a14;right:639.5px;transform-origin:100% 50%;">0.99</div>
<div class="t" style="top:479.82px;font-size:18px;line-height:18px;color:#282828;right:565.5px;transform-origin:100% 50%;">27799</div>
<div class="t" style="top:479.82px;font-size:18px;line-height:18px;color:#0c6a14;right:491.5px;transform-origin:100% 50%;">0.9814</div>
<div class="t" style="top:479.82px;font-size:18px;line-height:18px;color:#282828;right:417.5px;transform-origin:100% 50%;">28386</div>
<div class="t" style="top:479.82px;font-size:18px;line-height:18px;color:#0c6a14;right:345.5px;transform-origin:100% 50%;">0.9611</div>
<div class="t" style="top:478.92px;font-size:18px;line-height:18px;color:#282828;left:1582px;transform-origin:0 50%;">下降</div>
<div class="t" style="top:479.82px;font-size:18px;line-height:18px;color:#0c6a14;right:185.5px;transform-origin:100% 50%;">46.6</div>
<svg style="position:absolute;left:1285px;top:473px;" width="7" height="6" viewBox="0 0 7 6"><path d="M0 0h7L0 6z" fill="#008000"/></svg>
<svg style="position:absolute;left:1433px;top:473px;" width="7" height="6" viewBox="0 0 7 6"><path d="M0 0h7L0 6z" fill="#008000"/></svg>
<div class="t" style="top:509.82px;font-size:18px;line-height:18px;color:#282828;left:-211.0px;width:600px;text-align:center;transform-origin:50% 50%;letter-spacing:0.9px">2021/8/18</div>
<div class="t" style="top:509.82px;font-size:18px;line-height:18px;color:#282828;left:-114.5px;width:600px;text-align:center;transform-origin:50% 50%;">27,418.08</div>
<div class="t" style="top:509.82px;font-size:18px;line-height:18px;color:#282828;left:-26.5px;width:600px;text-align:center;transform-origin:50% 50%;">27,671.57</div>
<div class="t" style="top:509.82px;font-size:18px;line-height:18px;color:#282828;left:61.5px;width:600px;text-align:center;transform-origin:50% 50%;">27,347.77</div>
<div class="t" style="top:509.82px;font-size:18px;line-height:18px;color:#282828;left:152.5px;width:600px;text-align:center;transform-origin:50% 50%;">27,585.91</div>
<div class="t" style="top:509.82px;font-size:18px;line-height:18px;color:#282828;left:242.5px;width:600px;text-align:center;transform-origin:50% 50%;">161.44</div>
<div class="t" style="top:509.82px;font-size:18px;line-height:18px;color:#282828;left:328.5px;width:600px;text-align:center;transform-origin:50% 50%;">0.6</div>
<div class="t" style="top:509.82px;font-size:18px;line-height:18px;color:#282828;left:434.5px;width:600px;text-align:center;transform-origin:50% 50%;">841,159,900</div>
<div class="t" style="top:508.92px;font-size:18px;line-height:18px;color:#a5121c;left:536.0px;width:600px;text-align:center;transform-origin:50% 50%;">陽</div>
<div class="t" style="top:509.82px;font-size:18px;line-height:18px;color:#282828;left:605.5px;width:600px;text-align:center;transform-origin:50% 50%;">1</div>
<div class="t" style="top:509.82px;font-size:18px;line-height:18px;color:#282828;right:870.5px;transform-origin:100% 50%;">161.44</div>
<div class="t" style="top:509.82px;font-size:18px;line-height:18px;color:#282828;right:714.5px;transform-origin:100% 50%;">27704</div>
<div class="t" style="top:509.82px;font-size:18px;line-height:18px;color:#0c6a14;right:639.5px;transform-origin:100% 50%;">0.9957</div>
<div class="t" style="top:509.82px;font-size:18px;line-height:18px;color:#282828;right:565.5px;transform-origin:100% 50%;">27850</div>
<div class="t" style="top:509.82px;font-size:18px;line-height:18px;color:#0c6a14;right:491.5px;transform-origin:100% 50%;">0.9905</div>
<div class="t" style="top:509.82px;font-size:18px;line-height:18px;color:#282828;right:417.5px;transform-origin:100% 50%;">28405</div>
<div class="t" style="top:509.82px;font-size:18px;line-height:18px;color:#0c6a14;right:345.5px;transform-origin:100% 50%;">0.9712</div>
<div class="t" style="top:508.92px;font-size:18px;line-height:18px;color:#282828;left:1582px;transform-origin:0 50%;">下降</div>
<div class="t" style="top:509.82px;font-size:18px;line-height:18px;color:#0c6a14;right:185.5px;transform-origin:100% 50%;">41.8</div>
<svg style="position:absolute;left:1285px;top:503px;" width="7" height="6" viewBox="0 0 7 6"><path d="M0 0h7L0 6z" fill="#008000"/></svg>
<svg style="position:absolute;left:1433px;top:503px;" width="7" height="6" viewBox="0 0 7 6"><path d="M0 0h7L0 6z" fill="#008000"/></svg>
<div class="t" style="top:539.82px;font-size:18px;line-height:18px;color:#282828;left:-211.0px;width:600px;text-align:center;transform-origin:50% 50%;letter-spacing:0.9px">2021/8/17</div>
<div class="t" style="top:539.82px;font-size:18px;line-height:18px;color:#282828;left:-114.5px;width:600px;text-align:center;transform-origin:50% 50%;">27,666.94</div>
<div class="t" style="top:539.82px;font-size:18px;line-height:18px;color:#282828;left:-26.5px;width:600px;text-align:center;transform-origin:50% 50%;">27,750.39</div>
<div class="t" style="top:539.82px;font-size:18px;line-height:18px;color:#282828;left:61.5px;width:600px;text-align:center;transform-origin:50% 50%;">27,424.47</div>
<div class="t" style="top:539.82px;font-size:18px;line-height:18px;color:#282828;left:152.5px;width:600px;text-align:center;transform-origin:50% 50%;">27,424.47</div>
<div class="t" style="top:539.82px;font-size:18px;line-height:18px;color:#282828;left:242.5px;width:600px;text-align:center;transform-origin:50% 50%;">-98.72</div>
<div class="t" style="top:539.82px;font-size:18px;line-height:18px;color:#282828;left:328.5px;width:600px;text-align:center;transform-origin:50% 50%;">-0.4</div>
<div class="t" style="top:539.82px;font-size:18px;line-height:18px;color:#282828;left:434.5px;width:600px;text-align:center;transform-origin:50% 50%;">854,632,800</div>
<div class="t" style="top:538.92px;font-size:18px;line-height:18px;color:#0c6a14;left:536.0px;width:600px;text-align:center;transform-origin:50% 50%;">陰</div>
<div class="t" style="top:539.82px;font-size:18px;line-height:18px;color:#282828;left:605.5px;width:600px;text-align:center;transform-origin:50% 50%;">4</div>
<div class="t" style="top:539.82px;font-size:18px;line-height:18px;color:#282828;right:870.5px;transform-origin:100% 50%;">-650.36</div>
<div class="t" style="top:539.82px;font-size:18px;line-height:18px;color:#282828;right:714.5px;transform-origin:100% 50%;">27801</div>
<div class="t" style="top:539.82px;font-size:18px;line-height:18px;color:#0c6a14;right:639.5px;transform-origin:100% 50%;">0.9864</div>
<div class="t" style="top:539.82px;font-size:18px;line-height:18px;color:#282828;right:565.5px;transform-origin:100% 50%;">27864</div>
<div class="t" style="top:539.82px;font-size:18px;line-height:18px;color:#0c6a14;right:491.5px;transform-origin:100% 50%;">0.9842</div>
<div class="t" style="top:539.82px;font-size:18px;line-height:18px;color:#282828;right:417.5px;transform-origin:100% 50%;">28417</div>
<div class="t" style="top:539.82px;font-size:18px;line-height:18px;color:#0c6a14;right:345.5px;transform-origin:100% 50%;">0.9651</div>
<div class="t" style="top:538.92px;font-size:18px;line-height:18px;color:#282828;left:1582px;transform-origin:0 50%;">下降</div>
<div class="t" style="top:539.82px;font-size:18px;line-height:18px;color:#0c6a14;right:185.5px;transform-origin:100% 50%;">42.3</div>
<svg style="position:absolute;left:1285px;top:533px;" width="7" height="6" viewBox="0 0 7 6"><path d="M0 0h7L0 6z" fill="#008000"/></svg>
<svg style="position:absolute;left:1433px;top:533px;" width="7" height="6" viewBox="0 0 7 6"><path d="M0 0h7L0 6z" fill="#008000"/></svg>
<div class="t" style="top:569.82px;font-size:18px;line-height:18px;color:#282828;left:-211.0px;width:600px;text-align:center;transform-origin:50% 50%;letter-spacing:0.9px">2021/8/16</div>
<div class="t" style="top:569.82px;font-size:18px;line-height:18px;color:#282828;left:-114.5px;width:600px;text-align:center;transform-origin:50% 50%;">27,806.11</div>
<div class="t" style="top:569.82px;font-size:18px;line-height:18px;color:#282828;left:-26.5px;width:600px;text-align:center;transform-origin:50% 50%;">27,833.21</div>
<div class="t" style="top:569.82px;font-size:18px;line-height:18px;color:#282828;left:61.5px;width:600px;text-align:center;transform-origin:50% 50%;">27,427.38</div>
<div class="t" style="top:569.82px;font-size:18px;line-height:18px;color:#282828;left:152.5px;width:600px;text-align:center;transform-origin:50% 50%;">27,516.25</div>
<div class="t" style="top:569.82px;font-size:18px;line-height:18px;color:#282828;left:242.5px;width:600px;text-align:center;transform-origin:50% 50%;">-460.9</div>
<div class="t" style="top:569.82px;font-size:18px;line-height:18px;color:#282828;left:328.5px;width:600px;text-align:center;transform-origin:50% 50%;">-1.6</div>
<div class="t" style="top:569.82px;font-size:18px;line-height:18px;color:#282828;left:434.5px;width:600px;text-align:center;transform-origin:50% 50%;">903,023,300</div>
<div class="t" style="top:568.92px;font-size:18px;line-height:18px;color:#0c6a14;left:536.0px;width:600px;text-align:center;transform-origin:50% 50%;">陰</div>
<div class="t" style="top:569.82px;font-size:18px;line-height:18px;color:#282828;left:605.5px;width:600px;text-align:center;transform-origin:50% 50%;">3</div>
<div class="t" style="top:569.82px;font-size:18px;line-height:18px;color:#282828;right:870.5px;transform-origin:100% 50%;">-551.64</div>
<div class="t" style="top:569.82px;font-size:18px;line-height:18px;color:#282828;right:714.5px;transform-origin:100% 50%;">27894</div>
<div class="t" style="top:569.82px;font-size:18px;line-height:18px;color:#0c6a14;right:639.5px;transform-origin:100% 50%;">0.9865</div>
<div class="t" style="top:569.82px;font-size:18px;line-height:18px;color:#282828;right:565.5px;transform-origin:100% 50%;">27892</div>
<div class="t" style="top:569.82px;font-size:18px;line-height:18px;color:#0c6a14;right:491.5px;transform-origin:100% 50%;">0.9865</div>
<div class="t" style="top:569.82px;font-size:18px;line-height:18px;color:#282828;right:417.5px;transform-origin:100% 50%;">28428</div>
<div class="t" style="top:569.82px;font-size:18px;line-height:18px;color:#0c6a14;right:345.5px;transform-origin:100% 50%;">0.9679</div>
<div class="t" style="top:569.82px;font-size:18px;line-height:18px;color:#0c6a14;right:185.5px;transform-origin:100% 50%;">48</div>
<svg style="position:absolute;left:1285px;top:563px;" width="7" height="6" viewBox="0 0 7 6"><path d="M0 0h7L0 6z" fill="#008000"/></svg>
<svg style="position:absolute;left:1433px;top:563px;" width="7" height="6" viewBox="0 0 7 6"><path d="M0 0h7L0 6z" fill="#008000"/></svg>
<div class="t" style="top:599.82px;font-size:18px;line-height:18px;color:#282828;left:-211.0px;width:600px;text-align:center;transform-origin:50% 50%;letter-spacing:0.9px">2021/8/13</div>
<div class="t" style="top:599.82px;font-size:18px;line-height:18px;color:#282828;left:-114.5px;width:600px;text-align:center;transform-origin:50% 50%;">28,038.96</div>
<div class="t" style="top:599.82px;font-size:18px;line-height:18px;color:#282828;left:-26.5px;width:600px;text-align:center;transform-origin:50% 50%;">28,070.00</div>
<div class="t" style="top:599.82px;font-size:18px;line-height:18px;color:#282828;left:61.5px;width:600px;text-align:center;transform-origin:50% 50%;">27,949.33</div>
<div class="t" style="top:599.82px;font-size:18px;line-height:18px;color:#282828;left:152.5px;width:600px;text-align:center;transform-origin:50% 50%;">27,977.15</div>
<div class="t" style="top:599.82px;font-size:18px;line-height:18px;color:#282828;left:242.5px;width:600px;text-align:center;transform-origin:50% 50%;">-37.87</div>
<div class="t" style="top:599.82px;font-size:18px;line-height:18px;color:#282828;left:328.5px;width:600px;text-align:center;transform-origin:50% 50%;">-0.1</div>
<div class="t" style="top:599.82px;font-size:18px;line-height:18px;color:#282828;left:434.5px;width:600px;text-align:center;transform-origin:50% 50%;">992,100,000</div>
<div class="t" style="top:598.92px;font-size:18px;line-height:18px;color:#0c6a14;left:536.0px;width:600px;text-align:center;transform-origin:50% 50%;">陰</div>
<div class="t" style="top:599.82px;font-size:18px;line-height:18px;color:#282828;left:605.5px;width:600px;text-align:center;transform-origin:50% 50%;">2</div>
<div class="t" style="top:599.82px;font-size:18px;line-height:18px;color:#282828;right:870.5px;transform-origin:100% 50%;">-90.74</div>
<div class="t" style="top:599.82px;font-size:18px;line-height:18px;color:#282828;right:714.5px;transform-origin:100% 50%;">27955</div>
<div class="t" style="top:599.82px;font-size:18px;line-height:18px;color:#a5121c;right:639.5px;transform-origin:100% 50%;">1.0008</div>
<div class="t" style="top:599.82px;font-size:18px;line-height:18px;color:#282828;right:565.5px;transform-origin:100% 50%;">27926</div>
<div class="t" style="top:599.82px;font-size:18px;line-height:18px;color:#a5121c;right:491.5px;transform-origin:100% 50%;">1.0018</div>
<div class="t" style="top:599.82px;font-size:18px;line-height:18px;color:#282828;right:417.5px;transform-origin:100% 50%;">28437</div>
<div class="t" style="top:599.82px;font-size:18px;line-height:18px;color:#0c6a14;right:345.5px;transform-origin:100% 50%;">0.9838</div>
<div class="t" style="top:599.82px;font-size:18px;line-height:18px;color:#0c6a14;right:185.5px;transform-origin:100% 50%;">42.5</div>
<svg style="position:absolute;left:1285px;top:593px;" width="7" height="6" viewBox="0 0 7 6"><path d="M0 0h7L0 6z" fill="#008000"/></svg>
<svg style="position:absolute;left:1433px;top:593px;" width="7" height="6" viewBox="0 0 7 6"><path d="M0 0h7L0 6z" fill="#008000"/></svg>
<div class="t" style="top:629.82px;font-size:18px;line-height:18px;color:#282828;left:-211.0px;width:600px;text-align:center;transform-origin:50% 50%;letter-spacing:0.9px">2021/8/12</div>
<div class="t" style="top:629.82px;font-size:18px;line-height:18px;color:#282828;left:-114.5px;width:600px;text-align:center;transform-origin:50% 50%;">28,177.20</div>
<div class="t" style="top:629.82px;font-size:18px;line-height:18px;color:#282828;left:-26.5px;width:600px;text-align:center;transform-origin:50% 50%;">28,279.80</div>
<div class="t" style="top:629.82px;font-size:18px;line-height:18px;color:#282828;left:61.5px;width:600px;text-align:center;transform-origin:50% 50%;">28,006.31</div>
<div class="t" style="top:629.82px;font-size:18px;line-height:18px;color:#282828;left:152.5px;width:600px;text-align:center;transform-origin:50% 50%;">28,017.64</div>
<div class="t" style="top:629.82px;font-size:18px;line-height:18px;color:#282828;left:242.5px;width:600px;text-align:center;transform-origin:50% 50%;">-52.87</div>
<div class="t" style="top:629.82px;font-size:18px;line-height:18px;color:#282828;left:328.5px;width:600px;text-align:center;transform-origin:50% 50%;">-0.2</div>
<div class="t" style="top:629.82px;font-size:18px;line-height:18px;color:#282828;left:434.5px;width:600px;text-align:center;transform-origin:50% 50%;">936,441,500</div>
<div class="t" style="top:628.92px;font-size:18px;line-height:18px;color:#0c6a14;left:536.0px;width:600px;text-align:center;transform-origin:50% 50%;">陰</div>
<div class="t" style="top:629.82px;font-size:18px;line-height:18px;color:#282828;left:605.5px;width:600px;text-align:center;transform-origin:50% 50%;">1</div>
<div class="t" style="top:629.82px;font-size:18px;line-height:18px;color:#282828;right:870.5px;transform-origin:100% 50%;">-52.87</div>
<div class="t" style="top:629.82px;font-size:18px;line-height:18px;color:#282828;right:714.5px;transform-origin:100% 50%;">27905</div>
<div class="t" style="top:629.82px;font-size:18px;line-height:18px;color:#a5121c;right:639.5px;transform-origin:100% 50%;">1.004</div>
<div class="t" style="top:629.82px;font-size:18px;line-height:18px;color:#282828;right:565.5px;transform-origin:100% 50%;">27952</div>
<div class="t" style="top:629.82px;font-size:18px;line-height:18px;color:#a5121c;right:491.5px;transform-origin:100% 50%;">1.0023</div>
<div class="t" style="top:629.82px;font-size:18px;line-height:18px;color:#282828;right:417.5px;transform-origin:100% 50%;">28444</div>
<div class="t" style="top:629.82px;font-size:18px;line-height:18px;color:#0c6a14;right:345.5px;transform-origin:100% 50%;">0.985</div>
<div class="t" style="top:628.92px;font-size:18px;line-height:18px;color:#282828;left:1582px;transform-origin:0 50%;">下降</div>
<div class="t" style="top:629.82px;font-size:18px;line-height:18px;color:#0c6a14;right:185.5px;transform-origin:100% 50%;">41.5</div>
<svg style="position:absolute;left:1285px;top:623px;" width="7" height="6" viewBox="0 0 7 6"><path d="M0 0h7L0 6z" fill="#008000"/></svg>
<svg style="position:absolute;left:1433px;top:623px;" width="7" height="6" viewBox="0 0 7 6"><path d="M0 0h7L0 6z" fill="#008000"/></svg>
<div class="t" style="top:659.82px;font-size:18px;line-height:18px;color:#282828;left:-211.0px;width:600px;text-align:center;transform-origin:50% 50%;letter-spacing:0.9px">2021/8/11</div>
<div class="t" style="top:659.82px;font-size:18px;line-height:18px;color:#282828;left:-114.5px;width:600px;text-align:center;transform-origin:50% 50%;">28,045.84</div>
<div class="t" style="top:659.82px;font-size:18px;line-height:18px;color:#282828;left:-26.5px;width:600px;text-align:center;transform-origin:50% 50%;">28,146.68</div>
<div class="t" style="top:659.82px;font-size:18px;line-height:18px;color:#282828;left:61.5px;width:600px;text-align:center;transform-origin:50% 50%;">27,974.99</div>
<div class="t" style="top:659.82px;font-size:18px;line-height:18px;color:#282828;left:152.5px;width:600px;text-align:center;transform-origin:50% 50%;">28,070.51</div>
<div class="t" style="top:659.82px;font-size:18px;line-height:18px;color:#282828;left:242.5px;width:600px;text-align:center;transform-origin:50% 50%;">182.36</div>
<div class="t" style="top:659.82px;font-size:18px;line-height:18px;color:#282828;left:328.5px;width:600px;text-align:center;transform-origin:50% 50%;">0.7</div>
<div class="t" style="top:659.82px;font-size:18px;line-height:18px;color:#282828;left:434.5px;width:600px;text-align:center;transform-origin:50% 50%;">1,030,229,900</div>
<div class="t" style="top:658.92px;font-size:18px;line-height:18px;color:#a5121c;left:536.0px;width:600px;text-align:center;transform-origin:50% 50%;">陽</div>
<div class="t" style="top:659.82px;font-size:18px;line-height:18px;color:#282828;left:605.5px;width:600px;text-align:center;transform-origin:50% 50%;">4</div>
<div class="t" style="top:659.82px;font-size:18px;line-height:18px;color:#282828;right:870.5px;transform-origin:100% 50%;">486.43</div>
<div class="t" style="top:659.82px;font-size:18px;line-height:18px;color:#282828;right:714.5px;transform-origin:100% 50%;">27818</div>
<div class="t" style="top:659.82px;font-size:18px;line-height:18px;color:#a5121c;right:639.5px;transform-origin:100% 50%;">1.0091</div>
<div class="t" style="top:659.82px;font-size:18px;line-height:18px;color:#282828;right:565.5px;transform-origin:100% 50%;">27976</div>
<div class="t" style="top:659.82px;font-size:18px;line-height:18px;color:#a5121c;right:491.5px;transform-origin:100% 50%;">1.0034</div>
<div class="t" style="top:659.82px;font-size:18px;line-height:18px;color:#282828;right:417.5px;transform-origin:100% 50%;">28441</div>
<div class="t" style="top:659.82px;font-size:18px;line-height:18px;color:#0c6a14;right:345.5px;transform-origin:100% 50%;">0.987</div>
<div class="t" style="top:658.92px;font-size:18px;line-height:18px;color:#282828;left:1582px;transform-origin:0 50%;">下降</div>
<div class="t" style="top:659.82px;font-size:18px;line-height:18px;color:#0c6a14;right:185.5px;transform-origin:100% 50%;">41.6</div>
<svg style="position:absolute;left:1285px;top:653px;" width="7" height="6" viewBox="0 0 7 6"><path d="M0 0h7L0 6z" fill="#008000"/></svg>
<svg style="position:absolute;left:1433px;top:653px;" width="7" height="6" viewBox="0 0 7 6"><path d="M0 0h7L0 6z" fill="#008000"/></svg>
<div class="t" style="top:689.82px;font-size:18px;line-height:18px;color:#282828;left:-211.0px;width:600px;text-align:center;transform-origin:50% 50%;letter-spacing:0.9px">2021/8/10</div>
<div class="t" style="top:689.82px;font-size:18px;line-height:18px;color:#282828;left:-114.5px;width:600px;text-align:center;transform-origin:50% 50%;">27,887.03</div>
<div class="t" style="top:689.82px;font-size:18px;line-height:18px;color:#282828;left:-26.5px;width:600px;text-align:center;transform-origin:50% 50%;">28,128.61</div>
<div class="t" style="top:689.82px;font-size:18px;line-height:18px;color:#282828;left:61.5px;width:600px;text-align:center;transform-origin:50% 50%;">27,808.54</div>
<div class="t" style="top:689.82px;font-size:18px;line-height:18px;color:#282828;left:152.5px;width:600px;text-align:center;transform-origin:50% 50%;">27,888.15</div>
<div class="t" style="top:689.82px;font-size:18px;line-height:18px;color:#282828;left:242.5px;width:600px;text-align:center;transform-origin:50% 50%;">68.11</div>
<div class="t" style="top:689.82px;font-size:18px;line-height:18px;color:#282828;left:328.5px;width:600px;text-align:center;transform-origin:50% 50%;">0.2</div>
<div class="t" style="top:689.82px;font-size:18px;line-height:18px;color:#282828;left:434.5px;width:600px;text-align:center;transform-origin:50% 50%;">964,405,200</div>
<div class="t" style="top:688.92px;font-size:18px;line-height:18px;color:#a5121c;left:536.0px;width:600px;text-align:center;transform-origin:50% 50%;">陽</div>
<div class="t" style="top:689.82px;font-size:18px;line-height:18px;color:#282828;left:605.5px;width:600px;text-align:center;transform-origin:50% 50%;">3</div>
<div class="t" style="top:689.82px;font-size:18px;line-height:18px;color:#282828;right:870.5px;transform-origin:100% 50%;">304.07</div>
<div class="t" style="top:689.82px;font-size:18px;line-height:18px;color:#282828;right:714.5px;transform-origin:100% 50%;">27732</div>
<div class="t" style="top:689.82px;font-size:18px;line-height:18px;color:#a5121c;right:639.5px;transform-origin:100% 50%;">1.0056</div>
<div class="t" style="top:689.82px;font-size:18px;line-height:18px;color:#282828;right:565.5px;transform-origin:100% 50%;">28004</div>
<div class="t" style="top:689.82px;font-size:18px;line-height:18px;color:#0c6a14;right:491.5px;transform-origin:100% 50%;">0.9959</div>
<div class="t" style="top:689.82px;font-size:18px;line-height:18px;color:#282828;right:417.5px;transform-origin:100% 50%;">28441</div>
<div class="t" style="top:689.82px;font-size:18px;line-height:18px;color:#0c6a14;right:345.5px;transform-origin:100% 50%;">0.9806</div>
<div class="t" style="top:688.92px;font-size:18px;line-height:18px;color:#282828;left:1582px;transform-origin:0 50%;">下降</div>
<div class="t" style="top:689.82px;font-size:18px;line-height:18px;color:#0c6a14;right:185.5px;transform-origin:100% 50%;">42</div>
<svg style="position:absolute;left:1285px;top:683px;" width="7" height="6" viewBox="0 0 7 6"><path d="M0 0h7L0 6z" fill="#008000"/></svg>
<svg style="position:absolute;left:1433px;top:683px;" width="7" height="6" viewBox="0 0 7 6"><path d="M0 0h7L0 6z" fill="#008000"/></svg>
<div class="t" style="top:719.82px;font-size:18px;line-height:18px;color:#282828;left:-211.0px;width:600px;text-align:center;transform-origin:50% 50%;letter-spacing:0.9px">2021/8/6</div>
<div class="t" style="top:719.82px;font-size:18px;line-height:18px;color:#282828;left:-114.5px;width:600px;text-align:center;transform-origin:50% 50%;">27,709.22</div>
<div class="t" style="top:719.82px;font-size:18px;line-height:18px;color:#282828;left:-26.5px;width:600px;text-align:center;transform-origin:50% 50%;">27,888.87</div>
<div class="t" style="top:719.82px;font-size:18px;line-height:18px;color:#282828;left:61.5px;width:600px;text-align:center;transform-origin:50% 50%;">27,709.22</div>
<div class="t" style="top:719.82px;font-size:18px;line-height:18px;color:#282828;left:152.5px;width:600px;text-align:center;transform-origin:50% 50%;">27,820.04</div>
<div class="t" style="top:719.82px;font-size:18px;line-height:18px;color:#282828;left:242.5px;width:600px;text-align:center;transform-origin:50% 50%;">91.92</div>
<div class="t" style="top:719.82px;font-size:18px;line-height:18px;color:#282828;left:328.5px;width:600px;text-align:center;transform-origin:50% 50%;">0.3</div>
<div class="t" style="top:719.82px;font-size:18px;line-height:18px;color:#282828;left:434.5px;width:600px;text-align:center;transform-origin:50% 50%;">898,212,600</div>
<div class="t" style="top:718.92px;font-size:18px;line-height:18px;color:#a5121c;left:536.0px;width:600px;text-align:center;transform-origin:50% 50%;">陽</div>
<div class="t" style="top:719.82px;font-size:18px;line-height:18px;color:#282828;left:605.5px;width:600px;text-align:center;transform-origin:50% 50%;">2</div>
<div class="t" style="top:719.82px;font-size:18px;line-height:18px;color:#282828;right:870.5px;transform-origin:100% 50%;">235.96</div>
<div class="t" style="top:719.82px;font-size:18px;line-height:18px;color:#282828;right:714.5px;transform-origin:100% 50%;">27711</div>
<div class="t" style="top:719.82px;font-size:18px;line-height:18px;color:#a5121c;right:639.5px;transform-origin:100% 50%;">1.0039</div>
<div class="t" style="top:719.82px;font-size:18px;line-height:18px;color:#282828;right:565.5px;transform-origin:100% 50%;">28037</div>
<div class="t" style="top:719.82px;font-size:18px;line-height:18px;color:#0c6a14;right:491.5px;transform-origin:100% 50%;">0.9923</div>
<div class="t" style="top:719.82px;font-size:18px;line-height:18px;color:#282828;right:417.5px;transform-origin:100% 50%;">28434</div>
<div class="t" style="top:719.82px;font-size:18px;line-height:18px;color:#0c6a14;right:345.5px;transform-origin:100% 50%;">0.9784</div>
<div class="t" style="top:718.92px;font-size:18px;line-height:18px;color:#282828;left:1582px;transform-origin:0 50%;">下降</div>
<div class="t" style="top:719.82px;font-size:18px;line-height:18px;color:#0c6a14;right:185.5px;transform-origin:100% 50%;">40.6</div>
<svg style="position:absolute;left:1285px;top:713px;" width="7" height="6" viewBox="0 0 7 6"><path d="M0 0h7L0 6z" fill="#008000"/></svg>
<svg style="position:absolute;left:1433px;top:713px;" width="7" height="6" viewBox="0 0 7 6"><path d="M0 0h7L0 6z" fill="#008000"/></svg>
<div class="t" style="top:749.82px;font-size:18px;line-height:18px;color:#282828;left:-211.0px;width:600px;text-align:center;transform-origin:50% 50%;letter-spacing:0.9px">2021/8/5</div>
<div class="t" style="top:749.82px;font-size:18px;line-height:18px;color:#282828;left:-114.5px;width:600px;text-align:center;transform-origin:50% 50%;">27,526.67</div>
<div class="t" style="top:749.82px;font-size:18px;line-height:18px;color:#282828;left:-26.5px;width:600px;text-align:center;transform-origin:50% 50%;">27,741.55</div>
<div class="t" style="top:749.82px;font-size:18px;line-height:18px;color:#282828;left:61.5px;width:600px;text-align:center;transform-origin:50% 50%;">27,526.67</div>
<div class="t" style="top:749.82px;font-size:18px;line-height:18px;color:#282828;left:152.5px;width:600px;text-align:center;transform-origin:50% 50%;">27,728.12</div>
<div class="t" style="top:749.82px;font-size:18px;line-height:18px;color:#282828;left:242.5px;width:600px;text-align:center;transform-origin:50% 50%;">144.04</div>
<div class="t" style="top:749.82px;font-size:18px;line-height:18px;color:#282828;left:328.5px;width:600px;text-align:center;transform-origin:50% 50%;">0.5</div>
<div class="t" style="top:749.82px;font-size:18px;line-height:18px;color:#282828;left:434.5px;width:600px;text-align:center;transform-origin:50% 50%;">955,273,600</div>
<div class="t" style="top:748.92px;font-size:18px;line-height:18px;color:#a5121c;left:536.0px;width:600px;text-align:center;transform-origin:50% 50%;">陽</div>
<div class="t" style="top:749.82px;font-size:18px;line-height:18px;color:#282828;left:605.5px;width:600px;text-align:center;transform-origin:50% 50%;">1</div>
<div class="t" style="top:749.82px;font-size:18px;line-height:18px;color:#282828;right:870.5px;transform-origin:100% 50%;">144.04</div>
<div class="t" style="top:749.82px;font-size:18px;line-height:18px;color:#282828;right:714.5px;transform-origin:100% 50%;">27604</div>
<div class="t" style="top:749.82px;font-size:18px;line-height:18px;color:#a5121c;right:639.5px;transform-origin:100% 50%;">1.0045</div>
<div class="t" style="top:749.82px;font-size:18px;line-height:18px;color:#282828;right:565.5px;transform-origin:100% 50%;">28076</div>
<div class="t" style="top:749.82px;font-size:18px;line-height:18px;color:#0c6a14;right:491.5px;transform-origin:100% 50%;">0.9876</div>
<div class="t" style="top:749.82px;font-size:18px;line-height:18px;color:#282828;right:417.5px;transform-origin:100% 50%;">28439</div>
<div class="t" style="top:749.82px;font-size:18px;line-height:18px;color:#0c6a14;right:345.5px;transform-origin:100% 50%;">0.975</div>
<div class="t" style="top:748.92px;font-size:18px;line-height:18px;color:#282828;left:1582px;transform-origin:0 50%;">下降</div>
<div class="t" style="top:749.82px;font-size:18px;line-height:18px;color:#0c6a14;right:185.5px;transform-origin:100% 50%;">41.9</div>
<svg style="position:absolute;left:1285px;top:743px;" width="7" height="6" viewBox="0 0 7 6"><path d="M0 0h7L0 6z" fill="#008000"/></svg>
<svg style="position:absolute;left:1433px;top:743px;" width="7" height="6" viewBox="0 0 7 6"><path d="M0 0h7L0 6z" fill="#008000"/></svg>
<div class="t" style="top:779.82px;font-size:18px;line-height:18px;color:#282828;left:-211.0px;width:600px;text-align:center;transform-origin:50% 50%;letter-spacing:0.9px">2021/8/4</div>
<div class="t" style="top:779.82px;font-size:18px;line-height:18px;color:#282828;left:-114.5px;width:600px;text-align:center;transform-origin:50% 50%;">27,612.90</div>
<div class="t" style="top:779.82px;font-size:18px;line-height:18px;color:#282828;left:-26.5px;width:600px;text-align:center;transform-origin:50% 50%;">27,636.34</div>
<div class="t" style="top:779.82px;font-size:18px;line-height:18px;color:#282828;left:61.5px;width:600px;text-align:center;transform-origin:50% 50%;">27,488.74</div>
<div class="t" style="top:779.82px;font-size:18px;line-height:18px;color:#282828;left:152.5px;width:600px;text-align:center;transform-origin:50% 50%;">27,584.08</div>
<div class="t" style="top:779.82px;font-size:18px;line-height:18px;color:#282828;left:242.5px;width:600px;text-align:center;transform-origin:50% 50%;">-57.75</div>
<div class="t" style="top:779.82px;font-size:18px;line-height:18px;color:#282828;left:328.5px;width:600px;text-align:center;transform-origin:50% 50%;">-0.2</div>
<div class="t" style="top:779.82px;font-size:18px;line-height:18px;color:#282828;left:434.5px;width:600px;text-align:center;transform-origin:50% 50%;">965,552,300</div>
<div class="t" style="top:778.92px;font-size:18px;line-height:18px;color:#0c6a14;left:536.0px;width:600px;text-align:center;transform-origin:50% 50%;">陰</div>
<div class="t" style="top:779.82px;font-size:18px;line-height:18px;color:#282828;left:605.5px;width:600px;text-align:center;transform-origin:50% 50%;">1</div>
<div class="t" style="top:779.82px;font-size:18px;line-height:18px;color:#282828;right:870.5px;transform-origin:100% 50%;">-57.75</div>
<div class="t" style="top:779.82px;font-size:18px;line-height:18px;color:#282828;right:714.5px;transform-origin:100% 50%;">27615</div>
<div class="t" style="top:779.82px;font-size:18px;line-height:18px;color:#0c6a14;right:639.5px;transform-origin:100% 50%;">0.9989</div>
<div class="t" style="top:779.82px;font-size:18px;line-height:18px;color:#282828;right:565.5px;transform-origin:100% 50%;">28119</div>
<div class="t" style="top:779.82px;font-size:18px;line-height:18px;color:#0c6a14;right:491.5px;transform-origin:100% 50%;">0.981</div>
<div class="t" style="top:779.82px;font-size:18px;line-height:18px;color:#282828;right:417.5px;transform-origin:100% 50%;">28454</div>
<div class="t" style="top:779.82px;font-size:18px;line-height:18px;color:#0c6a14;right:345.5px;transform-origin:100% 50%;">0.9694</div>
<div class="t" style="top:778.92px;font-size:18px;line-height:18px;color:#282828;left:1582px;transform-origin:0 50%;">下降</div>
<div class="t" style="top:779.82px;font-size:18px;line-height:18px;color:#0c6a14;right:185.5px;transform-origin:100% 50%;">42.3</div>
<svg style="position:absolute;left:1285px;top:773px;" width="7" height="6" viewBox="0 0 7 6"><path d="M0 0h7L0 6z" fill="#008000"/></svg>
<svg style="position:absolute;left:1433px;top:773px;" width="7" height="6" viewBox="0 0 7 6"><path d="M0 0h7L0 6z" fill="#008000"/></svg>
<div class="t" style="top:809.82px;font-size:18px;line-height:18px;color:#282828;left:-211.0px;width:600px;text-align:center;transform-origin:50% 50%;letter-spacing:0.9px">2021/8/3</div>
<div class="t" style="top:809.82px;font-size:18px;line-height:18px;color:#282828;left:-114.5px;width:600px;text-align:center;transform-origin:50% 50%;">27,580.03</div>
<div class="t" style="top:809.82px;font-size:18px;line-height:18px;color:#282828;left:-26.5px;width:600px;text-align:center;transform-origin:50% 50%;">27,724.45</div>
<div class="t" style="top:809.82px;font-size:18px;line-height:18px;color:#282828;left:61.5px;width:600px;text-align:center;transform-origin:50% 50%;">27,492.40</div>
<div class="t" style="top:809.82px;font-size:18px;line-height:18px;color:#282828;left:152.5px;width:600px;text-align:center;transform-origin:50% 50%;">27,641.83</div>
<div class="t" style="top:809.82px;font-size:18px;line-height:18px;color:#282828;left:242.5px;width:600px;text-align:center;transform-origin:50% 50%;">-139.19</div>
<div class="t" style="top:809.82px;font-size:18px;line-height:18px;color:#282828;left:328.5px;width:600px;text-align:center;transform-origin:50% 50%;">-0.5</div>
<div class="t" style="top:809.82px;font-size:18px;line-height:18px;color:#282828;left:434.5px;width:600px;text-align:center;transform-origin:50% 50%;">873,263,100</div>
<div class="t" style="top:808.92px;font-size:18px;line-height:18px;color:#a5121c;left:536.0px;width:600px;text-align:center;transform-origin:50% 50%;">陽</div>
<div class="t" style="top:809.82px;font-size:18px;line-height:18px;color:#282828;left:605.5px;width:600px;text-align:center;transform-origin:50% 50%;">2</div>
<div class="t" style="top:809.82px;font-size:18px;line-height:18px;color:#282828;right:870.5px;transform-origin:100% 50%;">358.24</div>
<div class="t" style="top:809.82px;font-size:18px;line-height:18px;color:#282828;right:714.5px;transform-origin:100% 50%;">27614</div>
<div class="t" style="top:809.82px;font-size:18px;line-height:18px;color:#a5121c;right:639.5px;transform-origin:100% 50%;">1.001</div>
<div class="t" style="top:809.82px;font-size:18px;line-height:18px;color:#282828;right:565.5px;transform-origin:100% 50%;">28178</div>
<div class="t" style="top:809.82px;font-size:18px;line-height:18px;color:#0c6a14;right:491.5px;transform-origin:100% 50%;">0.981</div>
<div class="t" style="top:809.82px;font-size:18px;line-height:18px;color:#282828;right:417.5px;transform-origin:100% 50%;">28486</div>
<div class="t" style="top:809.82px;font-size:18px;line-height:18px;color:#0c6a14;right:345.5px;transform-origin:100% 50%;">0.9704</div>
<div class="t" style="top:808.92px;font-size:18px;line-height:18px;color:#282828;left:1582px;transform-origin:0 50%;">下降</div>
<div class="t" style="top:809.82px;font-size:18px;line-height:18px;color:#0c6a14;right:185.5px;transform-origin:100% 50%;">43</div>
<svg style="position:absolute;left:1285px;top:803px;" width="7" height="6" viewBox="0 0 7 6"><path d="M0 0h7L0 6z" fill="#008000"/></svg>
<svg style="position:absolute;left:1433px;top:803px;" width="7" height="6" viewBox="0 0 7 6"><path d="M0 0h7L0 6z" fill="#008000"/></svg>
<div class="t" style="top:839.82px;font-size:18px;line-height:18px;color:#282828;left:-211.0px;width:600px;text-align:center;transform-origin:50% 50%;letter-spacing:0.9px">2021/8/2</div>
<div class="t" style="top:839.82px;font-size:18px;line-height:18px;color:#282828;left:-114.5px;width:600px;text-align:center;transform-origin:50% 50%;">27,493.32</div>
<div class="t" style="top:839.82px;font-size:18px;line-height:18px;color:#282828;left:-26.5px;width:600px;text-align:center;transform-origin:50% 50%;">27,834.60</div>
<div class="t" style="top:839.82px;font-size:18px;line-height:18px;color:#282828;left:61.5px;width:600px;text-align:center;transform-origin:50% 50%;">27,493.32</div>
<div class="t" style="top:839.82px;font-size:18px;line-height:18px;color:#282828;left:152.5px;width:600px;text-align:center;transform-origin:50% 50%;">27,781.02</div>
<div class="t" style="top:839.82px;font-size:18px;line-height:18px;color:#282828;left:242.5px;width:600px;text-align:center;transform-origin:50% 50%;">497.43</div>
<div class="t" style="top:839.82px;font-size:18px;line-height:18px;color:#282828;left:328.5px;width:600px;text-align:center;transform-origin:50% 50%;">1.8</div>
<div class="t" style="top:839.82px;font-size:18px;line-height:18px;color:#282828;left:434.5px;width:600px;text-align:center;transform-origin:50% 50%;">946,118,100</div>
<div class="t" style="top:838.92px;font-size:18px;line-height:18px;color:#a5121c;left:536.0px;width:600px;text-align:center;transform-origin:50% 50%;">陽</div>
<div class="t" style="top:839.82px;font-size:18px;line-height:18px;color:#282828;left:605.5px;width:600px;text-align:center;transform-origin:50% 50%;">1</div>
<div class="t" style="top:839.82px;font-size:18px;line-height:18px;color:#282828;right:870.5px;transform-origin:100% 50%;">497.43</div>
<div class="t" style="top:839.82px;font-size:18px;line-height:18px;color:#282828;right:714.5px;transform-origin:100% 50%;">27680</div>
<div class="t" style="top:839.82px;font-size:18px;line-height:18px;color:#a5121c;right:639.5px;transform-origin:100% 50%;">1.0037</div>
<div class="t" style="top:839.82px;font-size:18px;line-height:18px;color:#282828;right:565.5px;transform-origin:100% 50%;">28235</div>
<div class="t" style="top:839.82px;font-size:18px;line-height:18px;color:#0c6a14;right:491.5px;transform-origin:100% 50%;">0.9839</div>
<div class="t" style="top:839.82px;font-size:18px;line-height:18px;color:#282828;right:417.5px;transform-origin:100% 50%;">28515</div>
<div class="t" style="top:839.82px;font-size:18px;line-height:18px;color:#0c6a14;right:345.5px;transform-origin:100% 50%;">0.9743</div>
<div class="t" style="top:838.92px;font-size:18px;line-height:18px;color:#282828;left:1582px;transform-origin:0 50%;">下降</div>
<div class="t" style="top:839.82px;font-size:18px;line-height:18px;color:#0c6a14;right:185.5px;transform-origin:100% 50%;">41.3</div>
<svg style="position:absolute;left:1285px;top:833px;" width="7" height="6" viewBox="0 0 7 6"><path d="M0 0h7L0 6z" fill="#008000"/></svg>
<svg style="position:absolute;left:1433px;top:833px;" width="7" height="6" viewBox="0 0 7 6"><path d="M0 0h7L0 6z" fill="#008000"/></svg>
<div class="t" style="top:869.82px;font-size:18px;line-height:18px;color:#282828;left:-211.0px;width:600px;text-align:center;transform-origin:50% 50%;letter-spacing:0.9px">2021/7/30</div>
<div class="t" style="top:869.82px;font-size:18px;line-height:18px;color:#282828;left:-114.5px;width:600px;text-align:center;transform-origin:50% 50%;">27,677.89</div>
<div class="t" style="top:869.82px;font-size:18px;line-height:18px;color:#282828;left:-26.5px;width:600px;text-align:center;transform-origin:50% 50%;">27,699.35</div>
<div class="t" style="top:869.82px;font-size:18px;line-height:18px;color:#282828;left:61.5px;width:600px;text-align:center;transform-origin:50% 50%;">27,272.49</div>
<div class="t" style="top:869.82px;font-size:18px;line-height:18px;color:#282828;left:152.5px;width:600px;text-align:center;transform-origin:50% 50%;">27,283.59</div>
<div class="t" style="top:869.82px;font-size:18px;line-height:18px;color:#282828;left:242.5px;width:600px;text-align:center;transform-origin:50% 50%;">-498.83</div>
<div class="t" style="top:869.82px;font-size:18px;line-height:18px;color:#282828;left:328.5px;width:600px;text-align:center;transform-origin:50% 50%;">-1.8</div>
<div class="t" style="top:869.82px;font-size:18px;line-height:18px;color:#282828;left:434.5px;width:600px;text-align:center;transform-origin:50% 50%;">1,017,033,600</div>
<div class="t" style="top:868.92px;font-size:18px;line-height:18px;color:#0c6a14;left:536.0px;width:600px;text-align:center;transform-origin:50% 50%;">陰</div>
<div class="t" style="top:869.82px;font-size:18px;line-height:18px;color:#282828;left:605.5px;width:600px;text-align:center;transform-origin:50% 50%;">1</div>
<div class="t" style="top:869.82px;font-size:18px;line-height:18px;color:#282828;right:870.5px;transform-origin:100% 50%;">-498.83</div>
<div class="t" style="top:869.82px;font-size:18px;line-height:18px;color:#282828;right:714.5px;transform-origin:100% 50%;">27690</div>
<div class="t" style="top:869.82px;font-size:18px;line-height:18px;color:#0c6a14;right:639.5px;transform-origin:100% 50%;">0.9853</div>
<div class="t" style="top:869.82px;font-size:18px;line-height:18px;color:#282828;right:565.5px;transform-origin:100% 50%;">28278</div>
<div class="t" style="top:869.82px;font-size:18px;line-height:18px;color:#0c6a14;right:491.5px;transform-origin:100% 50%;">0.9648</div>
<div class="t" style="top:869.82px;font-size:18px;line-height:18px;color:#282828;right:417.5px;transform-origin:100% 50%;">28540</div>
<div class="t" style="top:869.82px;font-size:18px;line-height:18px;color:#0c6a14;right:345.5px;transform-origin:100% 50%;">0.956</div>
<div class="t" style="top:868.92px;font-size:18px;line-height:18px;color:#282828;left:1582px;transform-origin:0 50%;">下降</div>
<div class="t" style="top:869.82px;font-size:18px;line-height:18px;color:#0c6a14;right:185.5px;transform-origin:100% 50%;">45.4</div>
<svg style="position:absolute;left:1285px;top:863px;" width="7" height="6" viewBox="0 0 7 6"><path d="M0 0h7L0 6z" fill="#008000"/></svg>
<svg style="position:absolute;left:1433px;top:863px;" width="7" height="6" viewBox="0 0 7 6"><path d="M0 0h7L0 6z" fill="#008000"/></svg>
<div class="t" style="top:899.82px;font-size:18px;line-height:18px;color:#282828;left:-211.0px;width:600px;text-align:center;transform-origin:50% 50%;letter-spacing:0.9px">2021/7/29</div>
<div class="t" style="top:899.82px;font-size:18px;line-height:18px;color:#282828;left:-114.5px;width:600px;text-align:center;transform-origin:50% 50%;">27,722.61</div>
<div class="t" style="top:899.82px;font-size:18px;line-height:18px;color:#282828;left:-26.5px;width:600px;text-align:center;transform-origin:50% 50%;">27,798.05</div>
<div class="t" style="top:899.82px;font-size:18px;line-height:18px;color:#282828;left:61.5px;width:600px;text-align:center;transform-origin:50% 50%;">27,663.41</div>
<div class="t" style="top:899.82px;font-size:18px;line-height:18px;color:#282828;left:152.5px;width:600px;text-align:center;transform-origin:50% 50%;">27,782.42</div>
<div class="t" style="top:899.82px;font-size:18px;line-height:18px;color:#282828;left:242.5px;width:600px;text-align:center;transform-origin:50% 50%;">200.76</div>
<div class="t" style="top:899.82px;font-size:18px;line-height:18px;color:#282828;left:328.5px;width:600px;text-align:center;transform-origin:50% 50%;">0.7</div>
<div class="t" style="top:899.82px;font-size:18px;line-height:18px;color:#282828;left:434.5px;width:600px;text-align:center;transform-origin:50% 50%;">909,202,300</div>
<div class="t" style="top:898.92px;font-size:18px;line-height:18px;color:#a5121c;left:536.0px;width:600px;text-align:center;transform-origin:50% 50%;">陽</div>
<div class="t" style="top:899.82px;font-size:18px;line-height:18px;color:#282828;left:605.5px;width:600px;text-align:center;transform-origin:50% 50%;">1</div>
<div class="t" style="top:899.82px;font-size:18px;line-height:18px;color:#282828;right:870.5px;transform-origin:100% 50%;">200.76</div>
<div class="t" style="top:899.82px;font-size:18px;line-height:18px;color:#282828;right:714.5px;transform-origin:100% 50%;">27743</div>
<div class="t" style="top:899.82px;font-size:18px;line-height:18px;color:#a5121c;right:639.5px;transform-origin:100% 50%;">1.0014</div>
<div class="t" style="top:899.82px;font-size:18px;line-height:18px;color:#282828;right:565.5px;transform-origin:100% 50%;">28342</div>
<div class="t" style="top:899.82px;font-size:18px;line-height:18px;color:#0c6a14;right:491.5px;transform-origin:100% 50%;">0.9803</div>
<div class="t" style="top:899.82px;font-size:18px;line-height:18px;color:#282828;right:417.5px;transform-origin:100% 50%;">28566</div>
<div class="t" style="top:899.82px;font-size:18px;line-height:18px;color:#0c6a14;right:345.5px;transform-origin:100% 50%;">0.9726</div>
<div class="t" style="top:898.92px;font-size:18px;line-height:18px;color:#282828;left:1582px;transform-origin:0 50%;">下降</div>
<div class="t" style="top:899.82px;font-size:18px;line-height:18px;color:#0c6a14;right:185.5px;transform-origin:100% 50%;">46.4</div>
<svg style="position:absolute;left:1285px;top:893px;" width="7" height="6" viewBox="0 0 7 6"><path d="M0 0h7L0 6z" fill="#008000"/></svg>
<svg style="position:absolute;left:1433px;top:893px;" width="7" height="6" viewBox="0 0 7 6"><path d="M0 0h7L0 6z" fill="#008000"/></svg>
<div class="t" style="top:929.82px;font-size:18px;line-height:18px;color:#282828;left:-211.0px;width:600px;text-align:center;transform-origin:50% 50%;letter-spacing:0.9px">2021/7/28</div>
<div class="t" style="top:929.82px;font-size:18px;line-height:18px;color:#282828;left:-114.5px;width:600px;text-align:center;transform-origin:50% 50%;">27,674.99</div>
<div class="t" style="top:929.82px;font-size:18px;line-height:18px;color:#282828;left:-26.5px;width:600px;text-align:center;transform-origin:50% 50%;">27,809.86</div>
<div class="t" style="top:929.82px;font-size:18px;line-height:18px;color:#282828;left:61.5px;width:600px;text-align:center;transform-origin:50% 50%;">27,466.99</div>
<div class="t" style="top:929.82px;font-size:18px;line-height:18px;color:#282828;left:152.5px;width:600px;text-align:center;transform-origin:50% 50%;">27,581.66</div>
<div class="t" style="top:929.82px;font-size:18px;line-height:18px;color:#282828;left:242.5px;width:600px;text-align:center;transform-origin:50% 50%;">-388.56</div>
<div class="t" style="top:929.82px;font-size:18px;line-height:18px;color:#282828;left:328.5px;width:600px;text-align:center;transform-origin:50% 50%;">-1.4</div>
<div class="t" style="top:929.82px;font-size:18px;line-height:18px;color:#282828;left:434.5px;width:600px;text-align:center;transform-origin:50% 50%;">918,664,400</div>
<div class="t" style="top:928.92px;font-size:18px;line-height:18px;color:#0c6a14;left:536.0px;width:600px;text-align:center;transform-origin:50% 50%;">陰</div>
<div class="t" style="top:929.82px;font-size:18px;line-height:18px;color:#282828;left:605.5px;width:600px;text-align:center;transform-origin:50% 50%;">1</div>
<div class="t" style="top:929.82px;font-size:18px;line-height:18px;color:#282828;right:870.5px;transform-origin:100% 50%;">-388.56</div>
<div class="t" style="top:929.82px;font-size:18px;line-height:18px;color:#282828;right:714.5px;transform-origin:100% 50%;">27664</div>
<div class="t" style="top:929.82px;font-size:18px;line-height:18px;color:#0c6a14;right:639.5px;transform-origin:100% 50%;">0.997</div>
<div class="t" style="top:929.82px;font-size:18px;line-height:18px;color:#282828;right:565.5px;transform-origin:100% 50%;">28386</div>
<div class="t" style="top:929.82px;font-size:18px;line-height:18px;color:#0c6a14;right:491.5px;transform-origin:100% 50%;">0.9717</div>
<div class="t" style="top:929.82px;font-size:18px;line-height:18px;color:#282828;right:417.5px;transform-origin:100% 50%;">28587</div>
<div class="t" style="top:929.82px;font-size:18px;line-height:18px;color:#0c6a14;right:345.5px;transform-origin:100% 50%;">0.9648</div>
<div class="t" style="top:928.92px;font-size:18px;line-height:18px;color:#282828;left:1582px;transform-origin:0 50%;">下降</div>
<div class="t" style="top:929.82px;font-size:18px;line-height:18px;color:#0c6a14;right:185.5px;transform-origin:100% 50%;">44.6</div>
<svg style="position:absolute;left:1285px;top:923px;" width="7" height="6" viewBox="0 0 7 6"><path d="M0 0h7L0 6z" fill="#008000"/></svg>
<svg style="position:absolute;left:1433px;top:923px;" width="7" height="6" viewBox="0 0 7 6"><path d="M0 0h7L0 6z" fill="#008000"/></svg>
<div class="t" style="top:959.82px;font-size:18px;line-height:18px;color:#282828;left:-211.0px;width:600px;text-align:center;transform-origin:50% 50%;letter-spacing:0.9px">2021/7/27</div>
<div class="t" style="top:959.82px;font-size:18px;line-height:18px;color:#282828;left:-114.5px;width:600px;text-align:center;transform-origin:50% 50%;">27,911.93</div>
<div class="t" style="top:959.82px;font-size:18px;line-height:18px;color:#282828;left:-26.5px;width:600px;text-align:center;transform-origin:50% 50%;">28,036.23</div>
<div class="t" style="top:959.82px;font-size:18px;line-height:18px;color:#282828;left:61.5px;width:600px;text-align:center;transform-origin:50% 50%;">27,862.69</div>
<div class="t" style="top:959.82px;font-size:18px;line-height:18px;color:#282828;left:152.5px;width:600px;text-align:center;transform-origin:50% 50%;">27,970.22</div>
<div class="t" style="top:959.82px;font-size:18px;line-height:18px;color:#282828;left:242.5px;width:600px;text-align:center;transform-origin:50% 50%;">136.93</div>
<div class="t" style="top:959.82px;font-size:18px;line-height:18px;color:#282828;left:328.5px;width:600px;text-align:center;transform-origin:50% 50%;">0.5</div>
<div class="t" style="top:959.82px;font-size:18px;line-height:18px;color:#282828;left:434.5px;width:600px;text-align:center;transform-origin:50% 50%;">804,628,900</div>
<div class="t" style="top:958.92px;font-size:18px;line-height:18px;color:#a5121c;left:536.0px;width:600px;text-align:center;transform-origin:50% 50%;">陽</div>
<div class="t" style="top:959.82px;font-size:18px;line-height:18px;color:#282828;left:605.5px;width:600px;text-align:center;transform-origin:50% 50%;">1</div>
<div class="t" style="top:959.82px;font-size:18px;line-height:18px;color:#282828;right:870.5px;transform-origin:100% 50%;">136.93</div>
<div class="t" style="top:959.82px;font-size:18px;line-height:18px;color:#282828;right:714.5px;transform-origin:100% 50%;">27678</div>
<div class="t" style="top:959.82px;font-size:18px;line-height:18px;color:#a5121c;right:639.5px;transform-origin:100% 50%;">1.0105</div>
<div class="t" style="top:959.82px;font-size:18px;line-height:18px;color:#282828;right:565.5px;transform-origin:100% 50%;">28403</div>
<div class="t" style="top:959.82px;font-size:18px;line-height:18px;color:#0c6a14;right:491.5px;transform-origin:100% 50%;">0.9848</div>
<div class="t" style="top:959.82px;font-size:18px;line-height:18px;color:#282828;right:417.5px;transform-origin:100% 50%;">28611</div>
<div class="t" style="top:959.82px;font-size:18px;line-height:18px;color:#0c6a14;right:345.5px;transform-origin:100% 50%;">0.9776</div>
<div class="t" style="top:958.92px;font-size:18px;line-height:18px;color:#282828;left:1582px;transform-origin:0 50%;">下降</div>
<div class="t" style="top:959.82px;font-size:18px;line-height:18px;color:#0c6a14;right:185.5px;transform-origin:100% 50%;">40.8</div>
<svg style="position:absolute;left:1285px;top:953px;" width="7" height="6" viewBox="0 0 7 6"><path d="M0 0h7L0 6z" fill="#008000"/></svg>
<svg style="position:absolute;left:1433px;top:953px;" width="7" height="6" viewBox="0 0 7 6"><path d="M0 0h7L0 6z" fill="#008000"/></svg>
<div style="left:1644px;top:263px;width:95px;height:29px;background:#d2d2d2;"></div>
<div style="left:1644px;top:291px;width:95px;height:2px;background:#217346;"></div>
<div style="left:1644px;top:263px;width:1px;height:29px;background:#a0a0a0;"></div>
<div style="left:1738px;top:263px;width:1px;height:29px;background:#a0a0a0;"></div>
<div style="left:0px;top:353px;width:36px;height:29px;background:#d2d2d2;"></div>
<div style="left:35px;top:353px;width:2px;height:29px;background:#217346;"></div>
<div style="left:0px;top:292px;width:1644px;height:1px;background:#9b9b9b;"></div>
<div style="left:1739px;top:292px;width:155px;height:1px;background:#9b9b9b;"></div>
<div style="left:36px;top:263px;width:1px;height:90px;background:#9b9b9b;"></div>
<div style="left:36px;top:382px;width:1px;height:593px;background:#9b9b9b;"></div>
<svg style="position:absolute;left:11px;top:267px;" width="22" height="22" viewBox="0 0 22 22"><path d="M22 0v22H0z" fill="#b4b4b4"/></svg>
<div class="t" style="top:269.22px;font-size:18px;line-height:18px;color:#222;left:-211.0px;width:600px;text-align:center;transform-origin:50% 50%;">A</div>
<div class="t" style="top:269.22px;font-size:18px;line-height:18px;color:#222;left:-114.5px;width:600px;text-align:center;transform-origin:50% 50%;">B</div>
<div class="t" style="top:269.22px;font-size:18px;line-height:18px;color:#222;left:-26.5px;width:600px;text-align:center;transform-origin:50% 50%;">C</div>
<div class="t" style="top:269.22px;font-size:18px;line-height:18px;color:#222;left:61.5px;width:600px;text-align:center;transform-origin:50% 50%;">D</div>
<div class="t" style="top:269.22px;font-size:18px;line-height:18px;color:#222;left:152.5px;width:600px;text-align:center;transform-origin:50% 50%;">E</div>
<div class="t" style="top:269.22px;font-size:18px;line-height:18px;color:#222;left:242.5px;width:600px;text-align:center;transform-origin:50% 50%;">F</div>
<div class="t" style="top:269.22px;font-size:18px;line-height:18px;color:#222;left:328.5px;width:600px;text-align:center;transform-origin:50% 50%;">G</div>
<div class="t" style="top:269.22px;font-size:18px;line-height:18px;color:#222;left:434.5px;width:600px;text-align:center;transform-origin:50% 50%;">H</div>
<div class="t" style="top:269.22px;font-size:18px;line-height:18px;color:#222;left:536.0px;width:600px;text-align:center;transform-origin:50% 50%;">I</div>
<div class="t" style="top:269.22px;font-size:18px;line-height:18px;color:#222;left:605.5px;width:600px;text-align:center;transform-origin:50% 50%;">J</div>
<div class="t" style="top:269.22px;font-size:18px;line-height:18px;color:#222;left:695.0px;width:600px;text-align:center;transform-origin:50% 50%;">K</div>
<div class="t" style="top:269.22px;font-size:18px;line-height:18px;color:#222;left:793.5px;width:600px;text-align:center;transform-origin:50% 50%;">L</div>
<div class="t" style="top:269.22px;font-size:18px;line-height:18px;color:#222;left:871.5px;width:600px;text-align:center;transform-origin:50% 50%;">M</div>
<div class="t" style="top:269.22px;font-size:18px;line-height:18px;color:#222;left:947.0px;width:600px;text-align:center;transform-origin:50% 50%;">N</div>
<div class="t" style="top:269.22px;font-size:18px;line-height:18px;color:#222;left:1021.5px;width:600px;text-align:center;transform-origin:50% 50%;">O</div>
<div class="t" style="top:269.22px;font-size:18px;line-height:18px;color:#222;left:1095.5px;width:600px;text-align:center;transform-origin:50% 50%;">P</div>
<div class="t" style="top:269.22px;font-size:18px;line-height:18px;color:#222;left:1169.5px;width:600px;text-align:center;transform-origin:50% 50%;">Q</div>
<div class="t" style="top:269.22px;font-size:18px;line-height:18px;color:#222;left:1242.5px;width:600px;text-align:center;transform-origin:50% 50%;">R</div>
<div class="t" style="top:269.22px;font-size:18px;line-height:18px;color:#222;left:1311.5px;width:600px;text-align:center;transform-origin:50% 50%;">S</div>
<div class="t" style="top:269.22px;font-size:18px;line-height:18px;color:#222;left:1391.5px;width:600px;text-align:center;transform-origin:50% 50%;">T</div>
<div class="t" style="top:269.22px;font-size:18px;line-height:18px;color:#222;left:1482.5px;width:600px;text-align:center;transform-origin:50% 50%;">U</div>
<div class="t" style="top:269.22px;font-size:18px;line-height:18px;color:#222;left:1571px;width:600px;text-align:center;transform-origin:50% 50%;">V</div>
<div class="t" style="top:299.72px;font-size:18px;line-height:18px;color:#222;left:-281.5px;width:600px;text-align:center;transform-origin:50% 50%;">1</div>
<div class="t" style="top:329.72px;font-size:18px;line-height:18px;color:#222;left:-281.5px;width:600px;text-align:center;transform-origin:50% 50%;">2</div>
<div class="t" style="top:359.72px;font-size:18px;line-height:18px;color:#217346;left:-281.5px;width:600px;text-align:center;transform-origin:50% 50%;">3</div>
<div class="t" style="top:389.72px;font-size:18px;line-height:18px;color:#222;left:-281.5px;width:600px;text-align:center;transform-origin:50% 50%;">4</div>
<div class="t" style="top:419.72px;font-size:18px;line-height:18px;color:#222;left:-281.5px;width:600px;text-align:center;transform-origin:50% 50%;">5</div>
<div class="t" style="top:449.72px;font-size:18px;line-height:18px;color:#222;left:-281.5px;width:600px;text-align:center;transform-origin:50% 50%;">6</div>
<div class="t" style="top:479.72px;font-size:18px;line-height:18px;color:#222;left:-281.5px;width:600px;text-align:center;transform-origin:50% 50%;">7</div>
<div class="t" style="top:509.72px;font-size:18px;line-height:18px;color:#222;left:-281.5px;width:600px;text-align:center;transform-origin:50% 50%;">8</div>
<div class="t" style="top:539.72px;font-size:18px;line-height:18px;color:#222;left:-281.5px;width:600px;text-align:center;transform-origin:50% 50%;">9</div>
<div class="t" style="top:569.72px;font-size:18px;line-height:18px;color:#222;left:-281.5px;width:600px;text-align:center;transform-origin:50% 50%;">10</div>
<div class="t" style="top:599.72px;font-size:18px;line-height:18px;color:#222;left:-281.5px;width:600px;text-align:center;transform-origin:50% 50%;">11</div>
<div class="t" style="top:629.72px;font-size:18px;line-height:18px;color:#222;left:-281.5px;width:600px;text-align:center;transform-origin:50% 50%;">12</div>
<div class="t" style="top:659.72px;font-size:18px;line-height:18px;color:#222;left:-281.5px;width:600px;text-align:center;transform-origin:50% 50%;">13</div>
<div class="t" style="top:689.72px;font-size:18px;line-height:18px;color:#222;left:-281.5px;width:600px;text-align:center;transform-origin:50% 50%;">14</div>
<div class="t" style="top:719.72px;font-size:18px;line-height:18px;color:#222;left:-281.5px;width:600px;text-align:center;transform-origin:50% 50%;">15</div>
<div class="t" style="top:749.72px;font-size:18px;line-height:18px;color:#222;left:-281.5px;width:600px;text-align:center;transform-origin:50% 50%;">16</div>
<div class="t" style="top:779.72px;font-size:18px;line-height:18px;color:#222;left:-281.5px;width:600px;text-align:center;transform-origin:50% 50%;">17</div>
<div class="t" style="top:809.72px;font-size:18px;line-height:18px;color:#222;left:-281.5px;width:600px;text-align:center;transform-origin:50% 50%;">18</div>
<div class="t" style="top:839.72px;font-size:18px;line-height:18px;color:#222;left:-281.5px;width:600px;text-align:center;transform-origin:50% 50%;">19</div>
<div class="t" style="top:869.72px;font-size:18px;line-height:18px;color:#222;left:-281.5px;width:600px;text-align:center;transform-origin:50% 50%;">20</div>
<div class="t" style="top:899.72px;font-size:18px;line-height:18px;color:#222;left:-281.5px;width:600px;text-align:center;transform-origin:50% 50%;">21</div>
<div class="t" style="top:929.72px;font-size:18px;line-height:18px;color:#222;left:-281.5px;width:600px;text-align:center;transform-origin:50% 50%;">22</div>
<div class="t" style="top:959.72px;font-size:18px;line-height:18px;color:#222;left:-281.5px;width:600px;text-align:center;transform-origin:50% 50%;">23</div>
<div style="left:1643px;top:351px;width:97px;height:33px;border:2px solid #217346"></div>
<div style="left:1645px;top:353px;width:93px;height:29px;border:1px solid #ffffff"></div>
<div style="left:1735px;top:379px;width:8px;height:8px;background:#ffffff;"></div>
<div style="left:1736px;top:380px;width:6px;height:6px;background:#217346;"></div>
<div style="left:1895px;top:263px;width:25px;height:712px;background:#e6e6e6;"></div>
<div style="left:1898px;top:285px;width:19px;height:690px;background:#d9d9d9;"></div>
<div style="left:1898px;top:265px;width:19px;height:19px;background:#fff;border:1px solid #ababab"></div>
<svg style="position:absolute;left:1902.5px;top:272px;" width="10" height="6" viewBox="0 0 10 6"><path d="M0 5L5 0l5 5z" fill="#666"/></svg>
<div style="left:1898px;top:285px;width:19px;height:37px;background:#fff;border:1px solid #ababab"></div>
<div style="left:1898px;top:957px;width:19px;height:19px;background:#fff;border:1px solid #ababab"></div>
<svg style="position:absolute;left:1902.5px;top:965px;" width="10" height="6" viewBox="0 0 10 6"><path d="M0 0h10L5 5z" fill="#666"/></svg>
<div style="left:0px;top:975px;width:1920px;height:28px;background:#e6e6e6;"></div>
<div style="left:0px;top:975px;width:1895px;height:1px;background:#a6a6a6;"></div>
<svg style="position:absolute;left:27.5px;top:984px;" width="6" height="10" viewBox="0 0 6 10"><path d="M6 0v10L0 5z" fill="#217346"/></svg>
<svg style="position:absolute;left:56px;top:984px;" width="6" height="10" viewBox="0 0 6 10"><path d="M0 0v10l6-5z" fill="#217346"/></svg>
<div style="left:80.5px;top:990px;width:2px;height:2px;background:#217346;"></div>
<div style="left:85.5px;top:990px;width:2px;height:2px;background:#217346;"></div>
<div style="left:90.5px;top:990px;width:2px;height:2px;background:#217346;"></div>
<div style="left:100px;top:980px;width:1px;height:19px;background:#a0a0a0;"></div>
<div style="left:103px;top:978px;width:115px;height:22px;background:#ffff00;"></div>
<div class="t" style="top:977.64px;font-size:16px;line-height:16px;color:#262626;left:-139.5px;width:600px;text-align:center;transform-origin:50% 50%;transform:scaleX(0.7857);">サイコロジカル</div>
<div style="left:220px;top:980px;width:1px;height:19px;background:#a0a0a0;"></div>
<div style="left:223px;top:978px;width:52px;height:22px;background:#ffff00;"></div>
<div class="t" style="top:977.64px;font-size:16px;line-height:16px;color:#262626;left:-51.0px;width:600px;text-align:center;transform-origin:50% 50%;transform:scaleX(1.0123);">RSI</div>
<div style="left:277px;top:980px;width:1px;height:19px;background:#a0a0a0;"></div>
<div style="left:280px;top:978px;width:138px;height:22px;background:#ffff00;"></div>
<div class="t" style="top:977.64px;font-size:16px;line-height:16px;color:#262626;left:49.0px;width:600px;text-align:center;transform-origin:50% 50%;transform:scaleX(0.8984);">エンベロープ指標</div>
<div style="left:420px;top:980px;width:1px;height:19px;background:#a0a0a0;"></div>
<div style="left:423px;top:978px;width:105px;height:22px;background:#ffff00;"></div>
<div class="t" style="top:977.64px;font-size:16px;line-height:16px;color:#262626;left:175.5px;width:600px;text-align:center;transform-origin:50% 50%;transform:scaleX(0.8646);">トレンド指標</div>
<div style="left:530px;top:980px;width:1px;height:19px;background:#a0a0a0;"></div>
<div style="left:533px;top:978px;width:70px;height:22px;background:#ffff00;"></div>
<div class="t" style="top:977.64px;font-size:16px;line-height:16px;color:#262626;left:268.0px;width:600px;text-align:center;transform-origin:50% 50%;transform:scaleX(1.0625);">騰落率</div>
<div style="left:605px;top:980px;width:1px;height:19px;background:#a0a0a0;"></div>
<div style="left:608px;top:978px;width:94px;height:22px;background:#ed7d31;"></div>
<div class="t" style="top:977.64px;font-size:16px;line-height:16px;color:#262626;left:355.0px;width:600px;text-align:center;transform-origin:50% 50%;transform:scaleX(1.0943);">20日騰落</div>
<div style="left:704px;top:980px;width:1px;height:19px;background:#a0a0a0;"></div>
<div style="left:707px;top:978px;width:107px;height:22px;background:#ed7d31;"></div>
<div class="t" style="top:977.64px;font-size:16px;line-height:16px;color:#262626;left:460.5px;width:600px;text-align:center;transform-origin:50% 50%;transform:scaleX(1.0065);">累計 データ</div>
<div style="left:816px;top:980px;width:1px;height:19px;background:#a0a0a0;"></div>
<div class="t" style="top:977.64px;font-size:16px;line-height:16px;color:#444;left:588px;width:600px;text-align:center;transform-origin:50% 50%;transform:scaleX(0.9219);">トレンド統計関連</div>
<div style="left:961px;top:980px;width:1px;height:19px;background:#a0a0a0;"></div>
<div style="left:961px;top:975px;width:94px;height:25px;background:linear-gradient(#ffffff 10%,#fbd0d0 60%,#f6a8a8 100%);border-left:1px solid #b0b0b0;border-right:1px solid #b0b0b0"></div>
<div style="left:961px;top:997px;width:94px;height:2px;background:#217346;"></div>
<div class="t" style="top:977.64px;font-size:16px;line-height:16px;color:#217346;left:708px;width:600px;text-align:center;transform-origin:50% 50%;transform:scaleX(1.1243);">日経225</div>
<div style="left:1057px;top:978px;width:23px;height:22px;background:#ff0000;overflow:hidden"><div class="t" style="left:10px;top:1px;font-size:17px;line-height:17px;color:#fff">マ</div></div>
<div style="left:1088px;top:990px;width:2px;height:2px;background:#217346;"></div>
<div style="left:1093px;top:990px;width:2px;height:2px;background:#217346;"></div>
<div style="left:1098px;top:990px;width:2px;height:2px;background:#217346;"></div>
<svg style="position:absolute;left:1112px;top:980px;" width="20" height="20" viewBox="0 0 20 20"><circle cx="10" cy="10" r="9" fill="none" stroke="#666" stroke-width="1.3"/><path d="M10 5v10M5 10h10" stroke="#666" stroke-width="1.4"/></svg>
<div style="left:1148px;top:982px;width:3px;height:3px;background:#a0a0a0;"></div>
<div style="left:1148px;top:988px;width:3px;height:3px;background:#a0a0a0;"></div>
<div style="left:1148px;top:994px;width:3px;height:3px;background:#a0a0a0;"></div>
<div style="left:1166px;top:980px;width:729px;height:19px;background:#d9d9d9;"></div>
<div style="left:1166px;top:980px;width:19px;height:19px;background:#fff;border:1px solid #ababab"></div>
<svg style="position:absolute;left:1172.5px;top:984.5px;" width="5" height="10" viewBox="0 0 5 10"><path d="M5 0v10L0 5z" fill="#666"/></svg>
<div style="left:1185px;top:980px;width:658px;height:19px;background:#fff;border:1px solid #ababab"></div>
<div style="left:1876px;top:980px;width:19px;height:19px;background:#fff;border:1px solid #ababab"></div>
<svg style="position:absolute;left:1884px;top:984.5px;" width="5" height="10" viewBox="0 0 5 10"><path d="M0 0v10l5-5z" fill="#666"/></svg>
<div style="left:0px;top:1003px;width:1920px;height:27px;background:#f3f2f1;"></div>
<div style="left:0px;top:1003px;width:1920px;height:1px;background:#d6d6d6;"></div>
<div class="t" style="top:1009.6px;font-size:15px;line-height:15px;color:#444;left:9px;transform-origin:0 50%;transform:scaleX(0.9833);">準備完了</div>
<div style="left:1538px;top:1003px;width:49px;height:27px;background:#d2d0ce;"></div>
<svg style="position:absolute;left:1555px;top:1009px;" width="17" height="16" viewBox="0 0 17 16"><rect x="0.5" y="0.5" width="15" height="14" fill="none" stroke="#555" stroke-width="1.2"/><path d="M5.5 0.5v14M10.5 0.5v14M0.5 5h15M0.5 10h15" stroke="#555" stroke-width="1.2"/></svg>
<svg style="position:absolute;left:1604px;top:1009px;" width="19" height="17" viewBox="0 0 19 17"><rect x="0.5" y="0.5" width="17" height="15" fill="none" stroke="#555" stroke-width="1.2"/><rect x="4" y="3" width="10" height="10" fill="none" stroke="#555"/><path d="M6 6h6M6 8h6M6 10h6" stroke="#555"/></svg>
<svg style="position:absolute;left:1654px;top:1009px;" width="18" height="17" viewBox="0 0 18 17"><path d="M0.5 0.5h16v15H0.5zM0.5 10.5h8v-10" fill="none" stroke="#555" stroke-width="1.3"/></svg>
<div style="left:1695px;top:1017px;width:9px;height:1.3px;background:#555;"></div>
<div style="left:1711px;top:1017px;width:125px;height:1px;background:#a0a0a0;"></div>
<div style="left:1771px;top:1010px;width:5px;height:14px;background:#6b6b6b;"></div>
<div style="left:1842px;top:1017px;width:10px;height:1.3px;background:#555;"></div>
<div style="left:1846.3px;top:1012.5px;width:1.3px;height:10px;background:#555;"></div>
<div class="t" style="top:1010.14px;font-size:16px;line-height:16px;color:#444;left:1869px;transform-origin:0 50%;transform:scaleX(0.9775);">100%</div>
<div style="left:0px;top:1030px;width:1920px;height:50px;background:#efe5d1;"></div>
<svg style="position:absolute;left:20px;top:1045px;" width="20" height="20" viewBox="0 0 20 20"><path d="M0 2.8L8.2 1.7v7.9H0zM9.2 1.5L20 0v9.6H9.2zM0 10.6h8.2v7.9L0 17.4zM9.2 10.6H20V20l-10.8-1.5z" fill="#111"/></svg>
<div style="left:60px;top:1030px;width:430px;height:50px;background:#ffffff;"></div>
<div style="left:60px;top:1030px;width:430px;height:1px;background:#e0e0e0;"></div>
<svg style="position:absolute;left:74px;top:1045px;" width="21" height="21" viewBox="0 0 21 21"><circle cx="13" cy="8" r="6.5" fill="none" stroke="#333" stroke-width="1.6"/><path d="M8.5 12.5L1 20" stroke="#333" stroke-width="1.8"/></svg>
<div class="t" style="top:1047.68px;font-size:17px;line-height:17px;color:#444;left:110px;transform-origin:0 50%;transform:scaleX(0.9216);">ここに入力して検索</div>
<svg style="position:absolute;left:510px;top:1045px;" width="20" height="20" viewBox="0 0 20 20"><circle cx="10" cy="10" r="8" fill="none" stroke="#111" stroke-width="2.6"/></svg>
<svg style="position:absolute;left:570px;top:1046px;" width="20" height="18" viewBox="0 0 20 18"><path d="M1 3h14v12H1zM0 1h16M0 17h16M19 0v4M19 7v5M19 14v4" fill="none" stroke="#222" stroke-width="1.5"/></svg>
<div style="left:1048px;top:1030px;width:61px;height:50px;background:#f7f2e8;"></div>
<div style="left:619px;top:1077px;width:51px;height:3px;background:#1a73c8;"></div>
<div style="left:929px;top:1077px;width:51px;height:3px;background:#1a73c8;"></div>
<div style="left:991px;top:1077px;width:51px;height:3px;background:#1a73c8;"></div>
<div style="left:1048px;top:1077px;width:61px;height:3px;background:#1a73c8;"></div>
<svg style="position:absolute;left:630px;top:1043px;" width="27" height="23" viewBox="0 0 27 23"><path d="M0 3h10l2 3h15v16H0z" fill="#f3c94c"/><rect x="0" y="0" width="11" height="5" fill="#e0a92c"/><path d="M6 12h15v10h-4v-5H10v5H6z" fill="#3d8fd6"/></svg>
<svg style="position:absolute;left:691px;top:1040px;" width="29" height="30" viewBox="0 0 29 30"><path d="M2 9h25v21H2z" fill="#222"/><path d="M9 9V4a5.5 5.5 0 0 1 11 0v5" fill="none" stroke="#222" stroke-width="2.5"/><rect x="9" y="15" width="5" height="5" fill="#f25022"/><rect x="15" y="15" width="5" height="5" fill="#7fba00"/><rect x="9" y="21" width="5" height="5" fill="#00a4ef"/><rect x="15" y="21" width="5" height="5" fill="#ffb900"/></svg>
<svg style="position:absolute;left:753px;top:1041px;" width="30" height="28" viewBox="0 0 30 28"><path d="M0 10L15 0l15 10v18H0z" fill="#0f6cbd"/><path d="M0 10l15 10 15-10v18H0z" fill="#38b3f0"/><path d="M3 9h24l-12 8z" fill="#fff"/></svg>
<svg style="position:absolute;left:815px;top:1040px;" width="30" height="30" viewBox="0 0 30 30"><rect width="30" height="30" fill="#f25a2c"/><circle cx="15" cy="15" r="11" fill="#fff"/><circle cx="15" cy="13" r="5" fill="none" stroke="#f25a2c" stroke-width="2"/><path d="M7 24c2-5 5-6 8-6s6 1 8 6" fill="none" stroke="#f25a2c" stroke-width="2"/></svg>
<svg style="position:absolute;left:878px;top:1041px;" width="27" height="27" viewBox="0 0 27 27"><rect x="0" y="0" width="27" height="27" rx="3" fill="#2f5fe0"/><text x="13.5" y="16" font-size="17" text-anchor="middle" fill="#fff" font-family="Liberation Sans">@</text><text x="13.5" y="24" font-size="6" text-anchor="middle" fill="#fff" font-family="Liberation Sans">menu</text></svg>
<svg style="position:absolute;left:939px;top:1041px;" width="30" height="30" viewBox="0 0 30 30"><circle cx="15" cy="15" r="14" fill="#1b9de2"/><path d="M29 15A14 14 0 0 0 3 8c4-4 14-4 17 3 2 4-2 6-6 6 4 5 12 4 15-2z" fill="#37c26f"/><path d="M3 8c-4 8 0 18 9 21 4 1 9 0 12-3-6 2-14-2-13-9 1-5 5-7 9-6-4-6-12-5-17-3z" fill="#0c59a4"/></svg>
<svg style="position:absolute;left:1001px;top:1041px;" width="30" height="30" viewBox="0 0 30 30"><rect x="0" y="0" width="30" height="30" fill="#dcebfa" stroke="#b8d4f0"/><rect x="6" y="6" width="18" height="13" fill="none" stroke="#2a7ad8" stroke-width="2"/><path d="M10 12l3 3 6-6" fill="none" stroke="#2a7ad8" stroke-width="2"/><path d="M3 21h24l-2 3H5z" fill="#2a7ad8"/></svg>
<svg style="position:absolute;left:1063px;top:1042px;" width="29" height="28" viewBox="0 0 29 28"><rect x="8" y="0" width="21" height="28" rx="1.5" fill="#21a366"/><rect x="8" y="9" width="21" height="10" fill="#107c41"/><rect x="18" y="0" width="11" height="9" fill="#33c481"/><rect x="8" y="19" width="21" height="9" fill="#185c37"/><rect x="0" y="6" width="16" height="16" rx="1.5" fill="#107c41"/><path d="M4 10l8 8M12 10l-8 8" stroke="#fff" stroke-width="2.2"/></svg>
<svg style="position:absolute;left:1385px;top:1043px;" width="25" height="25" viewBox="0 0 25 25"><defs><mask id="mm"><rect width="25" height="25" fill="#fff"/><circle cx="10" cy="8" r="8" fill="#000"/></mask></defs><circle cx="12.5" cy="12.5" r="11.5" fill="#ffc12e" mask="url(#mm)"/><ellipse cx="7" cy="6" rx="5" ry="3.5" fill="#b6d8f5"/></svg>
<div class="t" style="top:1048.18px;font-size:17px;line-height:17px;color:#262626;left:1423px;transform-origin:0 50%;transform:scaleX(0.9741);">30°C</div>
<div class="t" style="top:1048.18px;font-size:17px;line-height:17px;color:#262626;left:1472px;transform-origin:0 50%;transform:scaleX(0.8151);">晴れのちくもり</div>
<svg style="position:absolute;left:1591px;top:1047px;" width="17" height="10" viewBox="0 0 17 10"><path d="M1 9l7.5-8L16 9" fill="none" stroke="#222" stroke-width="1.4"/></svg>
<svg style="position:absolute;left:1618px;top:1046px;" width="22" height="16" viewBox="0 0 22 16"><path d="M5 14.5a4.5 4.5 0 0 1 .5-9 6 6 0 0 1 11 1.5 4 4 0 0 1 0 7.5z" fill="#bdbdbd" stroke="#333" stroke-width="1.3"/></svg>
<svg style="position:absolute;left:1649px;top:1048px;" width="22" height="16" viewBox="0 0 22 16"><rect x="4.5" y="3.5" width="15" height="10" fill="#222"/><path d="M19.5 6h1.5v5h-1.5M0 8.5h4M2 5v7" stroke="#222" stroke-width="1.4" fill="none"/></svg>
<svg style="position:absolute;left:1682px;top:1047px;" width="17" height="17" viewBox="0 0 17 17"><path d="M1 16A15 15 0 0 1 16 1M4 16A12 12 0 0 1 16 4M7 16a9 9 0 0 1 9-9M10 16a6 6 0 0 1 6-6" fill="none" stroke="#333" stroke-width="1.2"/><circle cx="15" cy="15" r="1.6" fill="#222"/></svg>
<svg style="position:absolute;left:1709px;top:1046px;" width="21" height="19" viewBox="0 0 21 19"><path d="M1 6h4l5-5v17l-5-5H1z" fill="none" stroke="#222" stroke-width="1.3"/><path d="M13 6a4 4 0 0 1 0 7M16 3a8 8 0 0 1 0 13M19 1a11 11 0 0 1 0 17" fill="none" stroke="#333" stroke-width="1.1"/></svg>
<div class="t" style="top:1045.42px;font-size:23px;line-height:23px;color:#222;left:1741px;transform-origin:0 50%;transform:scaleX(0.9776);">A</div>
<div class="t" style="top:1037.1px;font-size:15px;line-height:15px;color:#222;left:1507px;width:600px;text-align:center;transform-origin:50% 50%;transform:scaleX(0.9055);">20:31</div>
<div class="t" style="top:1059.1px;font-size:15px;line-height:15px;color:#222;left:1508px;width:600px;text-align:center;transform-origin:50% 50%;transform:scaleX(1.0123);">2021/08/26</div>
<svg style="position:absolute;left:1869px;top:1046px;" width="21" height="20" viewBox="0 0 21 20"><path d="M0.7 0.7h19v14H11l-4 4v-4H0.7z" fill="none" stroke="#222" stroke-width="1.3"/></svg>
<div style="left:1916px;top:1030px;width:1px;height:50px;background:#d8cfbd;"></div>
</body></html>
